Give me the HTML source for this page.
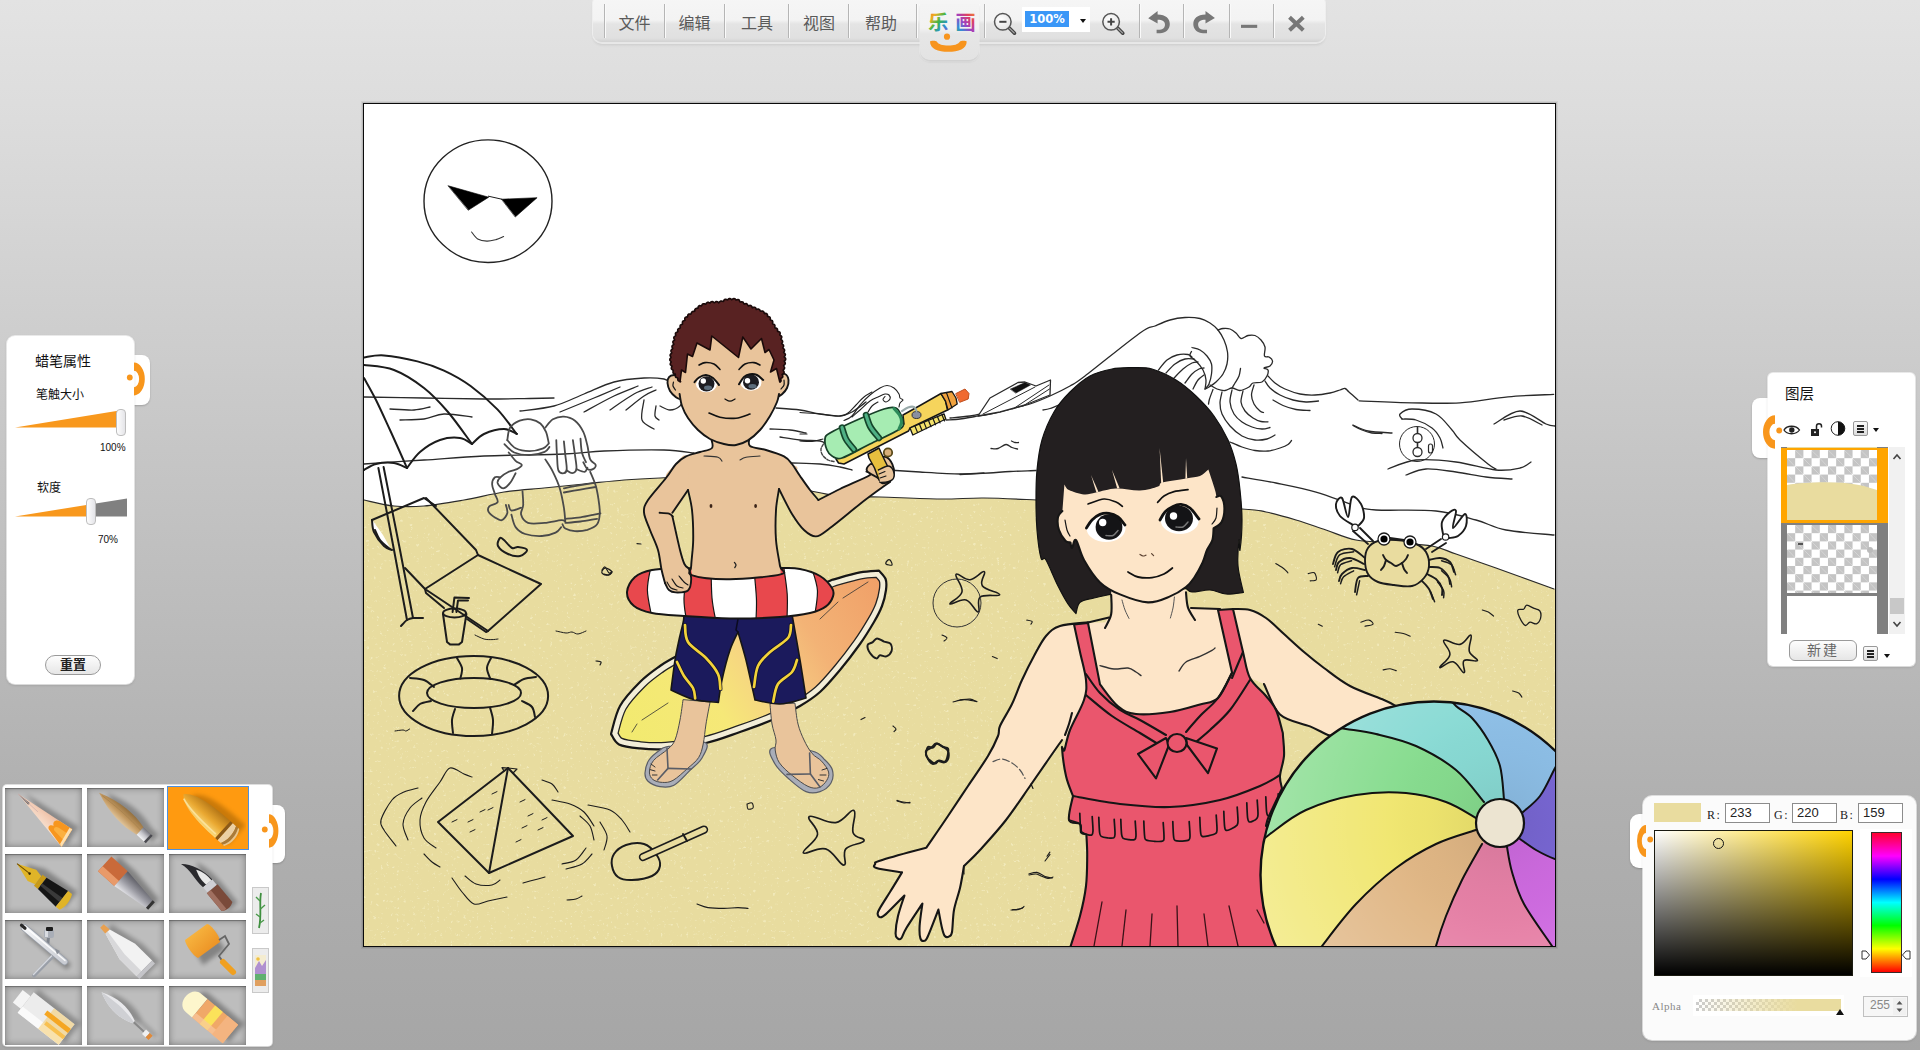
<!DOCTYPE html>
<html lang="zh"><head><meta charset="utf-8"><title>乐画</title>
<style>
html,body{margin:0;padding:0;}
body{width:1920px;height:1050px;overflow:hidden;position:relative;background:linear-gradient(180deg,#e3e3e3 0px,#dcdcdc 120px,#c4c4c4 480px,#b0b0b0 800px,#a6a6a6 1050px);font-family:"Liberation Sans","Noto Sans CJK SC",sans-serif;}
#cv{position:absolute;left:0;top:0;width:1920px;height:1050px;}

.abs{position:absolute;}
#tb{position:absolute;left:593px;top:-6px;width:732px;height:48px;border-radius:9px;background:linear-gradient(180deg,#f6f6f6 0,#f3f3f3 26px,#e4e4e4 30px,#e0e0e0 44px,#d2d2d2 48px);box-shadow:0 1px 0 1px rgba(255,255,255,.55),0 3px 3px rgba(0,0,0,.10);}
#tb .sep{position:absolute;top:9.500px;width:1px;height:34px;background:#b5b5b5;box-shadow:1px 0 0 #fafafa;}
#tb .mi{position:absolute;top:14px;font-size:16px;line-height:32px;color:#5a5a5a;width:60px;text-align:center;letter-spacing:0px;}
#logo{position:absolute;left:919.5px;top:4px;width:59px;height:56px;border-radius:0 0 10px 10px;background:linear-gradient(180deg,#f4f4f4 0,#f2f2f2 24px,#e6e6e6 30px,#e3e3e3 100%);box-shadow:0 2px 2px rgba(0,0,0,.12),0 1px 0 1px rgba(255,255,255,.4);}
#zoomf{position:absolute;left:1022px;top:7px;width:68px;height:25px;background:#fff;}
#zoomf span{position:absolute;left:3px;top:4px;width:44px;height:16px;background:#3a97f7;color:#fff;font-weight:bold;font-size:11.5px;line-height:16px;text-align:center;font-family:"DejaVu Sans","Liberation Sans",sans-serif;}
.panel{position:absolute;background:#fff;border-radius:8px;box-shadow:0 0 0 1px rgba(255,255,255,.6),0 1px 3px rgba(0,0,0,.18);}
.tab{position:absolute;background:#fff;box-shadow:0 1px 2px rgba(0,0,0,.2);}
.t14{position:absolute;font-size:14px;line-height:16px;color:#111;white-space:nowrap;}
.t12{position:absolute;font-size:12px;line-height:14px;color:#111;white-space:nowrap;}
.t10{position:absolute;font-size:10px;line-height:11px;color:#111;white-space:nowrap;font-family:"Liberation Sans",sans-serif;}
.hnd{position:absolute;width:10px;height:27px;border-radius:4px;border:1px solid #bdbdbd;background:linear-gradient(90deg,#fdfdfd,#e4e4e8);box-sizing:border-box;}
.btn{position:absolute;box-sizing:border-box;border:1px solid #9a9a9a;border-radius:10px;background:linear-gradient(180deg,#fdfdfd,#e6e6e6);text-align:center;color:#222;}
.cell{position:absolute;width:77px;height:59px;background:#bdbdbd;box-shadow:inset 0 0 7px rgba(0,0,0,.38),inset 0 1px 1px rgba(0,0,0,.3);overflow:hidden;}
.cell svg{position:absolute;left:0;top:0;}
.inp{position:absolute;box-sizing:border-box;border:1px solid #8c8c8c;background:#fff;font-size:13px;line-height:18px;color:#222;padding-left:4px;font-family:"Liberation Sans",sans-serif;}
.lab{position:absolute;font-size:12px;line-height:12px;color:#222;font-family:"Liberation Serif",serif;letter-spacing:1.5px;}
.lbtn{position:absolute;box-sizing:border-box;width:15px;height:15px;border:1px solid #999;border-radius:2px;background:linear-gradient(180deg,#fafafa,#dcdcdc);}
.lbtn i{position:absolute;left:3px;width:7px;height:1.6px;background:#222;}
.arr{position:absolute;width:0;height:0;border-left:3.5px solid transparent;border-right:3.5px solid transparent;border-top:4px solid #111;}

</style></head><body>
<svg id="cv" viewBox="0 0 1920 1050" width="1920" height="1050">
<defs><clipPath id="cpCanvas"><rect x="364" y="104" width="1191" height="842"/></clipPath>
<filter id="speck" x="0" y="0" width="100%" height="100%" color-interpolation-filters="sRGB"><feTurbulence type="fractalNoise" baseFrequency="0.3" numOctaves="3" seed="11" result="n"/><feColorMatrix in="n" type="matrix" values="0 0 0 0 0.97  0 0 0 0 0.95  0 0 0 0 0.80  6 0 0 0 -3.95"/><feComposite in2="SourceGraphic" operator="in"/></filter>
</defs>
<rect x="361" y="101" width="1197" height="848" fill="#000" opacity="0.06"/>
<rect x="362" y="102" width="1195" height="846" fill="#000" opacity="0.10"/>
<rect x="363" y="103" width="1193" height="844" fill="#0a0a0a"/>
<rect x="364" y="104" width="1191" height="842" fill="#fff"/>
<g clip-path="url(#cpCanvas)">
<ellipse cx="488" cy="201.200" rx="64" ry="61.300" fill="#fff" stroke="#222" stroke-width="1.400"/>
<path d="M448.3 185.8 L488.7 197.2 L468.5 210.1Z" fill="#000" stroke="#000" stroke-width="0.6" stroke-linejoin="round" stroke-linecap="round" />
<path d="M501.8 199.2 L537.1 197.7 L515.5 216.8Z" fill="#000" stroke="#000" stroke-width="0.6" stroke-linejoin="round" stroke-linecap="round" />
<path d="M488.4 196.2 L501.8 199.2" fill="none" stroke="#000" stroke-width="0.9" stroke-linejoin="round" stroke-linecap="round" />
<path d="M471.6 232C472.6 233.2 475.1 237.4 477.7 238.9C480.2 240.4 483.8 241 486.9 241.1C489.9 241.2 493.2 240.3 496 239.6C498.8 238.8 502.3 237.1 503.6 236.6" fill="none" stroke="#333" stroke-width="1.1" stroke-linejoin="round" stroke-linecap="round" />
<path d="M364 397C374 397.2 404 397.7 424 398C444 398.3 467.3 398.9 484 399C500.7 399.1 512.3 398.8 524 398.6C535.7 398.4 549 398.1 554 398" fill="none" stroke="#2a2a2a" stroke-width="1.3" stroke-linejoin="round" stroke-linecap="round" />
<path d="M520 411C525.7 410.2 543.3 408.8 554 406C564.7 403.2 574 398 584 394C594 390 604 384.7 614 382C624 379.3 635.7 378.5 644 378C652.3 377.5 659.7 378.2 664 379C668.3 379.8 669 382.3 670 383" fill="none" stroke="#2a2a2a" stroke-width="1.3" stroke-linejoin="round" stroke-linecap="round" />
<path d="M560 412C565.7 409.7 584 402.2 594 398C604 393.8 615.7 388.8 620 387" fill="none" stroke="#2a2a2a" stroke-width="1.3" stroke-linejoin="round" stroke-linecap="round" />
<path d="M584 412C589 409.3 605 400.3 614 396C623 391.7 634 387.7 638 386" fill="none" stroke="#2a2a2a" stroke-width="1.3" stroke-linejoin="round" stroke-linecap="round" />
<path d="M610 410C614 407.3 627 397.8 634 394C641 390.2 649 388.2 652 387" fill="none" stroke="#2a2a2a" stroke-width="1.3" stroke-linejoin="round" stroke-linecap="round" />
<path d="M626 410C629 407.7 639 399.3 644 396C649 392.7 654 391 656 390" fill="none" stroke="#2a2a2a" stroke-width="1.3" stroke-linejoin="round" stroke-linecap="round" />
<path d="M644 400C643.7 403.3 640.3 415.2 642 420C643.7 424.8 652 427.5 654 429" fill="none" stroke="#2a2a2a" stroke-width="1.3" stroke-linejoin="round" stroke-linecap="round" />
<path d="M656 406C655.8 407.7 654.5 413.7 655 416C655.5 418.3 658.3 419.3 659 420" fill="none" stroke="#2a2a2a" stroke-width="1.3" stroke-linejoin="round" stroke-linecap="round" />
<path d="M660 406C661.7 406.7 666.7 410 670 410C673.3 410 677.7 408 680 406C682.3 404 683.3 399.3 684 398" fill="none" stroke="#2a2a2a" stroke-width="1.3" stroke-linejoin="round" stroke-linecap="round" />
<path d="M390 409C394 409.2 407.3 410.3 414 410C420.7 409.7 427.3 407.5 430 407" fill="none" stroke="#2a2a2a" stroke-width="1.3" stroke-linejoin="round" stroke-linecap="round" />
<path d="M400 420C404 419.8 416.7 420 424 419C431.3 418 436 414.3 444 414C452 413.7 467.3 416.5 472 417" fill="none" stroke="#2a2a2a" stroke-width="1.3" stroke-linejoin="round" stroke-linecap="round" />
<path d="M364 464C374 463.3 404 461.3 424 460C444 458.7 460.7 457 484 456C507.3 455 544 454.8 564 454C584 453.2 587.3 451.7 604 451C620.7 450.3 649 449.7 664 450C679 450.3 689 452.5 694 453" fill="none" stroke="#2a2a2a" stroke-width="1.3" stroke-linejoin="round" stroke-linecap="round" />
<path d="M776 408C780 408.3 792.7 409 800 410C807.3 411 813.3 413 820 414C826.7 415 834.7 416.3 840 416C845.3 415.7 847.7 414.3 852 412C856.3 409.7 863.7 403.7 866 402" fill="none" stroke="#2a2a2a" stroke-width="1.3" stroke-linejoin="round" stroke-linecap="round" />
<path d="M770 429C773.3 429.2 784 429.3 790 430C796 430.7 803.3 432.5 806 433" fill="none" stroke="#2a2a2a" stroke-width="1.3" stroke-linejoin="round" stroke-linecap="round" />
<path d="M780 437C783.3 437.5 793.3 439.3 800 440C806.7 440.7 815.7 440.3 820 441C824.3 441.7 825 443.5 826 444" fill="none" stroke="#2a2a2a" stroke-width="1.3" stroke-linejoin="round" stroke-linecap="round" />
<path d="M792 463C796.7 463.2 812 463.3 820 464C828 464.7 834.7 466 840 467C845.3 468 850 469.5 852 470" fill="none" stroke="#2a2a2a" stroke-width="1.3" stroke-linejoin="round" stroke-linecap="round" />
<path d="M888 470C893.3 470.3 908 471.3 920 472C932 472.7 949.3 473.8 960 474C970.7 474.2 980 473.2 984 473" fill="none" stroke="#2a2a2a" stroke-width="1.3" stroke-linejoin="round" stroke-linecap="round" />
<path d="M950 418C953.3 417.7 964.3 416.8 970 416C975.7 415.2 981.7 413.5 984 413" fill="none" stroke="#2a2a2a" stroke-width="1.3" stroke-linejoin="round" stroke-linecap="round" />
<path d="M946 420C948.3 419.8 955.2 419.6 960 419C964.8 418.4 970 417.3 975 416.5C980 415.7 984.2 415.2 990 414C995.8 412.8 1003.3 410.7 1010 409C1016.7 407.3 1023.3 406.2 1030 404C1036.7 401.8 1043.3 399 1050 396C1056.7 393 1064.2 389.3 1070 386C1075.8 382.7 1073.3 384.8 1085 376C1096.7 367.2 1128.3 341.3 1140 333C1151.7 324.7 1150 328.2 1155 326C1160 323.8 1165 321.4 1170 320C1175 318.6 1180 317.8 1185 317.5C1190 317.2 1195.8 317.6 1200 318.5C1204.2 319.4 1207 321.1 1210 323C1213 324.9 1215.7 327.2 1218 330C1220.3 332.8 1222.4 336.3 1224 340C1225.6 343.7 1227 348 1227.5 352C1228 356 1227.8 360.3 1227 364C1226.2 367.7 1224.8 371 1223 374C1221.2 377 1218.3 379.8 1216 382C1213.7 384.2 1210.8 385.8 1209 387C1207.2 388.2 1205.7 388.7 1205 389" fill="none" stroke="#2a2a2a" stroke-width="1.3" stroke-linejoin="round" stroke-linecap="round" />
<path d="M1205 389C1205.2 387.5 1206.3 383.2 1206 380C1205.7 376.8 1204.7 373.2 1203 370C1201.3 366.8 1198.2 363.3 1196 361C1193.8 358.7 1190.8 357.6 1190 356C1189.2 354.4 1191.2 352.2 1191.5 351.5" fill="none" stroke="#2a2a2a" stroke-width="1.3" stroke-linejoin="round" stroke-linecap="round" />
<path d="M1192 347.5C1193.3 347.9 1197.5 348.6 1200 350C1202.5 351.4 1205.1 353.7 1207 356C1208.9 358.3 1210.8 361 1211.5 364C1212.2 367 1211.9 370.7 1211.5 374C1211.1 377.3 1209.9 381.7 1209 384C1208.1 386.3 1206.5 387.3 1206 388" fill="none" stroke="#2a2a2a" stroke-width="1.3" stroke-linejoin="round" stroke-linecap="round" />
<path d="M1158.5 370C1159.9 368.3 1163.9 362.5 1167 360C1170.1 357.5 1173.5 355.9 1177 355C1180.5 354.1 1185.5 354.2 1188 354.5C1190.5 354.8 1191.3 356.6 1192 357" fill="none" stroke="#2a2a2a" stroke-width="1.3" stroke-linejoin="round" stroke-linecap="round" />
<path d="M1166 373C1167.5 371.5 1171.8 366.3 1175 364C1178.2 361.7 1181.8 359.8 1185 359C1188.2 358.2 1192.5 359 1194 359" fill="none" stroke="#2a2a2a" stroke-width="1.3" stroke-linejoin="round" stroke-linecap="round" />
<path d="M1174 378C1175.5 376.5 1180 371.5 1183 369C1186 366.5 1189.5 364.2 1192 363C1194.5 361.8 1197 362.2 1198 362" fill="none" stroke="#2a2a2a" stroke-width="1.3" stroke-linejoin="round" stroke-linecap="round" />
<path d="M1185 383C1186.2 381.5 1189.7 376.3 1192 374C1194.3 371.7 1197 370 1199 369C1201 368 1203.2 368.2 1204 368" fill="none" stroke="#2a2a2a" stroke-width="1.3" stroke-linejoin="round" stroke-linecap="round" />
<path d="M1193 389C1193.8 387.5 1196.2 382.3 1198 380C1199.8 377.7 1203 375.8 1204 375" fill="none" stroke="#2a2a2a" stroke-width="1.3" stroke-linejoin="round" stroke-linecap="round" />
<path d="M1218 330C1218.8 329.8 1221 328.7 1223 328.5C1225 328.3 1227.8 328.2 1230 329C1232.2 329.8 1234.2 331.4 1236 333C1237.8 334.6 1239 338.1 1241 338.5C1243 338.9 1245.7 336 1248 335.5C1250.3 335 1252.8 334.8 1255 335.5C1257.2 336.2 1259.3 338.1 1261 340C1262.7 341.9 1264.4 344.3 1265 347C1265.6 349.7 1263.8 354.3 1264.5 356C1265.2 357.7 1267.7 356.2 1269 357C1270.3 357.8 1272.3 359.5 1272.5 361C1272.7 362.5 1271.4 364.8 1270 366C1268.6 367.2 1264.3 367.3 1264 368C1263.7 368.7 1267.5 368.7 1268 370C1268.5 371.3 1268 374 1267 376C1266 378 1264.3 380.8 1262 382C1259.7 383.2 1255.2 382.2 1253 383C1250.8 383.8 1251.2 385.8 1249 387C1246.8 388.2 1242.8 390.3 1240 390.5C1237.2 390.7 1234.5 388 1232 388C1229.5 388 1227.5 390.3 1225 390.5C1222.5 390.7 1219.5 389.9 1217 389C1214.5 388.1 1211.2 385.7 1210 385" fill="none" stroke="#2a2a2a" stroke-width="1.3" stroke-linejoin="round" stroke-linecap="round" />
<path d="M1240.5 368.5C1240.2 369.8 1239.9 373.6 1239 376C1238.1 378.4 1236.2 381 1235 383C1233.8 385 1232.5 387.2 1232 388" fill="none" stroke="#2a2a2a" stroke-width="1.3" stroke-linejoin="round" stroke-linecap="round" />
<path d="M1213 389.5C1212.4 391.1 1210.2 396.6 1209.5 399C1208.8 401.4 1208.7 403.2 1208.5 404" fill="none" stroke="#2a2a2a" stroke-width="1.3" stroke-linejoin="round" stroke-linecap="round" />
<path d="M1222 392C1221.7 393.8 1220 399.3 1220 403C1220 406.7 1220.3 410.2 1222 414C1223.7 417.8 1226.7 422.3 1230 426C1233.3 429.7 1237.8 433.7 1242 436C1246.2 438.3 1250.8 439.5 1255 440C1259.2 440.5 1263.7 439.8 1267 439C1270.3 438.2 1273.7 435.7 1275 435" fill="none" stroke="#2a2a2a" stroke-width="1.3" stroke-linejoin="round" stroke-linecap="round" />
<path d="M1232 390C1231.7 392 1229.7 398 1230 402C1230.3 406 1232 410.7 1234 414C1236 417.3 1239 419.8 1242 422C1245 424.2 1248.7 425.8 1252 427C1255.3 428.2 1259 428.9 1262 429C1265 429.1 1268.7 427.8 1270 427.5" fill="none" stroke="#2a2a2a" stroke-width="1.3" stroke-linejoin="round" stroke-linecap="round" />
<path d="M1243 391C1242.7 392.8 1240.7 398.7 1241 402C1241.3 405.3 1243 408.3 1245 411C1247 413.7 1250.3 416.2 1253 418C1255.7 419.8 1258.5 420.9 1261 421.5C1263.5 422.1 1266.8 421.8 1268 421.8" fill="none" stroke="#2a2a2a" stroke-width="1.3" stroke-linejoin="round" stroke-linecap="round" />
<path d="M1254 385C1253.6 386.7 1251.5 391.8 1251.5 395C1251.5 398.2 1252.6 401.3 1254 404C1255.4 406.7 1258.4 409.6 1260 411C1261.6 412.4 1262.9 412.2 1263.5 412.5" fill="none" stroke="#2a2a2a" stroke-width="1.3" stroke-linejoin="round" stroke-linecap="round" />
<path d="M1230 442C1232 442.8 1237.8 445.6 1242 447C1246.2 448.4 1250.7 449.8 1255 450.5C1259.3 451.2 1263.8 451.4 1268 451C1272.2 450.6 1276.7 449.1 1280 448C1283.3 446.9 1286.1 445.8 1288 444.5C1289.9 443.2 1290.9 441.2 1291.5 440.5" fill="none" stroke="#2a2a2a" stroke-width="1.3" stroke-linejoin="round" stroke-linecap="round" />
<path d="M1268 376C1269.2 377.2 1272.2 380.8 1275 383C1277.8 385.2 1280.8 387.2 1285 389C1289.2 390.8 1295 393 1300 394C1305 395 1310 395.2 1315 395C1320 394.8 1325.8 393.8 1330 393C1334.2 392.2 1337.5 390.8 1340 390C1342.5 389.2 1343.5 388.2 1345 388.5C1346.5 388.8 1346.8 390.1 1349 392C1351.2 393.9 1356.5 398.7 1358 400" fill="none" stroke="#2a2a2a" stroke-width="1.3" stroke-linejoin="round" stroke-linecap="round" />
<path d="M1265 381C1265.8 382.2 1267.5 385.7 1270 388C1272.5 390.3 1276.2 393 1280 395C1283.8 397 1288.7 398.8 1293 400C1297.3 401.2 1301.8 401.8 1306 402C1310.2 402.2 1316.4 401.2 1318.5 401" fill="none" stroke="#2a2a2a" stroke-width="1.3" stroke-linejoin="round" stroke-linecap="round" />
<path d="M1273 400C1274.7 400.9 1279.2 403.9 1283 405.5C1286.8 407.1 1291.5 408.7 1296 409.5C1300.5 410.3 1307.7 410.3 1310 410.5" fill="none" stroke="#2a2a2a" stroke-width="1.3" stroke-linejoin="round" stroke-linecap="round" />
<path d="M1353 425.5C1354.5 426.2 1358.8 428.8 1362 430C1365.2 431.2 1368.7 432.4 1372 433C1375.3 433.6 1380.3 433.4 1382 433.5" fill="none" stroke="#2a2a2a" stroke-width="1.3" stroke-linejoin="round" stroke-linecap="round" />
<path d="M1359.2 400.9C1368 401.2 1395.2 402.5 1412 402.8C1428.8 403.1 1444 403.8 1460 402.8C1476 401.8 1492.4 398.2 1508 396.8C1523.6 395.4 1546 394.8 1553.6 394.4" fill="none" stroke="#2a2a2a" stroke-width="1.3" stroke-linejoin="round" stroke-linecap="round" />
<path d="M978 416 L990 398 L1018 382.5 L1025 382 L1036 386 L1050.5 380 L1050 395 L1025 405 L1000 412Z" fill="#fff" stroke="#2a2a2a" stroke-width="1.3" stroke-linejoin="round" stroke-linecap="round" />
<path d="M1010.5 389 L1025 382.5 L1030.5 385 L1016 393Z" fill="#111" stroke="#111" stroke-width="0.5" stroke-linejoin="round" stroke-linecap="round" />
<path d="M983 414 L1035 387" fill="none" stroke="#2a2a2a" stroke-width="1" stroke-linejoin="round" stroke-linecap="round" />
<path d="M1013 409 L1049 385" fill="none" stroke="#2a2a2a" stroke-width="1" stroke-linejoin="round" stroke-linecap="round" />
<path d="M1023 406 L1049.5 389" fill="none" stroke="#2a2a2a" stroke-width="1" stroke-linejoin="round" stroke-linecap="round" />
<path d="M1043 410C1044.2 409.8 1047.2 409.4 1050 408.5C1052.8 407.6 1058.3 405.2 1060 404.5" fill="none" stroke="#2a2a2a" stroke-width="1.3" stroke-linejoin="round" stroke-linecap="round" />
<path d="M991 448.5C992.2 448.5 995.5 449.2 998 448.5C1000.5 447.8 1003.7 444.7 1006 444.5C1008.3 444.3 1010.1 446.8 1012 447.5C1013.9 448.2 1016.6 448.8 1017.5 449" fill="none" stroke="#2a2a2a" stroke-width="1.3" stroke-linejoin="round" stroke-linecap="round" />
<path d="M1011.5 441C1012.1 441.2 1013.8 442.2 1015 442.5C1016.2 442.8 1017.9 442.5 1018.5 442.5" fill="none" stroke="#2a2a2a" stroke-width="1.3" stroke-linejoin="round" stroke-linecap="round" />
<path d="M960 474.5C964.8 474.2 980.7 473.5 989 473C997.3 472.5 1002.2 471.9 1010 471.5C1017.8 471.1 1031.7 470.7 1036 470.5" fill="none" stroke="#2a2a2a" stroke-width="1.3" stroke-linejoin="round" stroke-linecap="round" />
<path d="M1402 419C1401.7 418.2 1398.3 415.7 1400 414C1401.7 412.3 1406 409 1412 409C1418 409 1429.3 410.5 1436 414C1442.7 417.5 1448 425.7 1452 430C1456 434.3 1454 434.3 1460 440C1466 445.7 1482 459.2 1488 464C1494 468.8 1494.7 468.2 1496 469" fill="none" stroke="#2a2a2a" stroke-width="1.3" stroke-linejoin="round" stroke-linecap="round" />
<path d="M1402 419C1404.3 419.2 1411 418.5 1416 420C1421 421.5 1428 425 1432 428C1436 431 1438.2 434.7 1440 438C1441.8 441.3 1442.5 446.3 1443 448" fill="none" stroke="#2a2a2a" stroke-width="1.3" stroke-linejoin="round" stroke-linecap="round" />
<path d="M1388 469C1392.7 467.5 1404.7 461.2 1416 460C1427.3 458.8 1442.7 460.3 1456 462C1469.3 463.7 1485.3 469 1496 470C1506.7 471 1514.2 469.3 1520 468C1525.8 466.7 1529.2 463 1531 462" fill="none" stroke="#2a2a2a" stroke-width="1.3" stroke-linejoin="round" stroke-linecap="round" />
<path d="M1406 475C1409.3 474 1417.7 469.5 1426 469C1434.3 468.5 1446 470.7 1456 472C1466 473.3 1476.7 475.8 1486 477C1495.3 478.2 1507.7 478.7 1512 479" fill="none" stroke="#2a2a2a" stroke-width="1.3" stroke-linejoin="round" stroke-linecap="round" />
<path d="M1494 424C1498.3 421.8 1511.3 411 1520 411C1528.7 411 1540.2 421.5 1546 424C1551.8 426.5 1553.5 425.7 1555 426" fill="none" stroke="#2a2a2a" stroke-width="1.3" stroke-linejoin="round" stroke-linecap="round" />
<path d="M1504 420C1507 419.3 1515.7 415.2 1522 416C1528.3 416.8 1538.7 423.5 1542 425" fill="none" stroke="#2a2a2a" stroke-width="1.3" stroke-linejoin="round" stroke-linecap="round" />
<path d="M1353 425C1355.5 426 1361.5 429.7 1368 431C1374.5 432.3 1388 432.7 1392 433" fill="none" stroke="#2a2a2a" stroke-width="1.3" stroke-linejoin="round" stroke-linecap="round" />
<circle cx="1417" cy="444" r="17.5" fill="none" stroke="#2a2a2a" stroke-width="1"/>
<circle cx="1417.5" cy="438" r="4.5" fill="#fff" stroke="#2a2a2a" stroke-width="1.3"/>
<circle cx="1417.5" cy="452" r="4.5" fill="#fff" stroke="#2a2a2a" stroke-width="1.3"/>
<path d="M1417.5 427V433M1417.5 443V447" stroke="#2a2a2a" stroke-width="1.6"/>
<rect x="1428.5" y="444" width="4" height="9" rx="2" fill="none" stroke="#2a2a2a" stroke-width="1.2"/>
<path d="M1242 477C1247.7 478 1263.7 480.5 1276 483C1288.3 485.5 1302.7 488.2 1316 492C1329.3 495.8 1346 503 1356 506C1366 509 1362.7 509.2 1376 510C1389.3 510.8 1419.3 509.3 1436 511C1452.7 512.7 1464.3 516.8 1476 520C1487.7 523.2 1493 527.5 1506 530C1519 532.5 1546 534.2 1554 535" fill="none" stroke="#2a2a2a" stroke-width="1.3" stroke-linejoin="round" stroke-linecap="round" />
<path d="M364 500C369 501 384 505 394 506C404 507 412.3 507 424 506C435.7 505 450.7 502.3 464 500C477.3 497.7 490.7 494 504 492C517.3 490 530.7 489.3 544 488C557.3 486.7 570.7 485.3 584 484C597.3 482.7 611.3 481 624 480C636.7 479 647.3 478.5 660 478C672.7 477.5 683.3 476.3 700 477C716.7 477.7 740.7 479.5 760 482C779.3 484.5 802.7 489.7 816 492C829.3 494.3 829.3 495.2 840 496C850.7 496.8 863.3 496.5 880 497C896.7 497.5 922.7 498.8 940 499C957.3 499.2 967.8 497.8 984 498C1000.2 498.2 1011 498.8 1037 500C1063 501.2 1105.8 503.5 1140 505C1174.2 506.5 1221 507.8 1242 509C1263 510.2 1257 510.2 1266 512C1275 513.8 1286 517 1296 520C1306 523 1316 526.7 1326 530C1336 533.3 1344.3 537.8 1356 540C1367.7 542.2 1383.3 542 1396 543C1408.7 544 1422 544.2 1432 546C1442 547.8 1445.3 550.3 1456 554C1466.7 557.7 1479.7 562.2 1496 568C1512.3 573.8 1544.3 585.5 1554 589L1556 589L1556 947L362 947L362 500Z" fill="#e8dc9f"/>
<defs><clipPath id="cpSand"><path d="M364 500C369 501 384 505 394 506C404 507 412.3 507 424 506C435.7 505 450.7 502.3 464 500C477.3 497.7 490.7 494 504 492C517.3 490 530.7 489.3 544 488C557.3 486.7 570.7 485.3 584 484C597.3 482.7 611.3 481 624 480C636.7 479 647.3 478.5 660 478C672.7 477.5 683.3 476.3 700 477C716.7 477.7 740.7 479.5 760 482C779.3 484.5 802.7 489.7 816 492C829.3 494.3 829.3 495.2 840 496C850.7 496.8 863.3 496.5 880 497C896.7 497.5 922.7 498.8 940 499C957.3 499.2 967.8 497.8 984 498C1000.2 498.2 1011 498.8 1037 500C1063 501.2 1105.8 503.5 1140 505C1174.2 506.5 1221 507.8 1242 509C1263 510.2 1257 510.2 1266 512C1275 513.8 1286 517 1296 520C1306 523 1316 526.7 1326 530C1336 533.3 1344.3 537.8 1356 540C1367.7 542.2 1383.3 542 1396 543C1408.7 544 1422 544.2 1432 546C1442 547.8 1445.3 550.3 1456 554C1466.7 557.7 1479.7 562.2 1496 568C1512.3 573.8 1544.3 585.5 1554 589L1556 589L1556 947L362 947L362 500Z"/></clipPath></defs>
<g clip-path="url(#cpSand)" opacity="0.6"><rect x="364" y="470" width="1191" height="476" fill="#fff" filter="url(#speck)"/></g>
<path d="M364 500C369 501 384 505 394 506C404 507 412.3 507 424 506C435.7 505 450.7 502.3 464 500C477.3 497.7 490.7 494 504 492C517.3 490 530.7 489.3 544 488C557.3 486.7 570.7 485.3 584 484C597.3 482.7 611.3 481 624 480C636.7 479 647.3 478.5 660 478C672.7 477.5 683.3 476.3 700 477C716.7 477.7 740.7 479.5 760 482C779.3 484.5 802.7 489.7 816 492C829.3 494.3 829.3 495.2 840 496C850.7 496.8 863.3 496.5 880 497C896.7 497.5 922.7 498.8 940 499C957.3 499.2 967.8 497.8 984 498C1000.2 498.2 1011 498.8 1037 500C1063 501.2 1105.8 503.5 1140 505C1174.2 506.5 1221 507.8 1242 509C1263 510.2 1257 510.2 1266 512C1275 513.8 1286 517 1296 520C1306 523 1316 526.7 1326 530C1336 533.3 1344.3 537.8 1356 540C1367.7 542.2 1383.3 542 1396 543C1408.7 544 1422 544.2 1432 546C1442 547.8 1445.3 550.3 1456 554C1466.7 557.7 1479.7 562.2 1496 568C1512.3 573.8 1544.3 585.5 1554 589" fill="none" stroke="#2a2a2a" stroke-width="1.2" stroke-linejoin="round" stroke-linecap="round" />
<path d="M364 357.4C367.3 357.1 375.1 354.7 384 355.4C392.9 356.1 407.4 358.9 417.4 361.4C427.4 363.9 435.1 366.5 444 370.6C452.9 374.7 461.7 379.5 470.6 386C479.5 392.5 489.8 401.5 497.4 409.4C505 417.3 513.2 429.6 516.4 433.6" fill="none" stroke="#1c1c1c" stroke-width="2.0" stroke-linejoin="round" stroke-linecap="round" />
<path d="M364 365C369 365.8 384 366.2 394 370C404 373.8 415 381 424 388C433 395 440 402.7 448 412C456 421.3 468 438.7 472 444" fill="none" stroke="#1c1c1c" stroke-width="2.0" stroke-linejoin="round" stroke-linecap="round" />
<path d="M364 378C366 381.7 371.7 391.3 376 400C380.3 408.7 384.8 418.7 390 430C395.2 441.3 404.2 461.7 407 468" fill="none" stroke="#1c1c1c" stroke-width="2.0" stroke-linejoin="round" stroke-linecap="round" />
<path d="M517 434C514.8 433.2 509.5 429 504 429C498.5 429 489.3 431.5 484 434C478.7 436.5 474 442.3 472 444L472 444C470 443 465.3 438.7 460 438C454.7 437.3 446.7 437.7 440 440C433.3 442.3 425.5 447.3 420 452C414.5 456.7 409.2 465.3 407 468L407 468C404.8 467.2 399.2 463.7 394 463C388.8 462.3 381 462.8 376 464C371 465.2 366 469 364 470" fill="none" stroke="#1c1c1c" stroke-width="2.0" stroke-linejoin="round" stroke-linecap="round" />
<path d="M378.4 468 L394 550 L394 550 L407 620" fill="none" stroke="#1c1c1c" stroke-width="2.0" stroke-linejoin="round" stroke-linecap="round" />
<path d="M383.6 467 L400 550 L400 550 L413 618" fill="none" stroke="#1c1c1c" stroke-width="2.0" stroke-linejoin="round" stroke-linecap="round" />
<path d="M401 626C402 625 405 621.3 407 620C409 618.7 410.3 618.3 413 618C415.7 617.7 421.3 618 423 618" fill="none" stroke="#1c1c1c" stroke-width="2.0" stroke-linejoin="round" stroke-linecap="round" />
<path d="M372 520 L424 498 L436 506" fill="none" stroke="#1c1c1c" stroke-width="2.0" stroke-linejoin="round" stroke-linecap="round" />
<path d="M426 498 L476 550 L478 555" fill="none" stroke="#1c1c1c" stroke-width="2.0" stroke-linejoin="round" stroke-linecap="round" />
<path d="M372.3 520C372.6 521.7 372.7 526.3 374 530C375.3 533.7 377.1 538.7 380 542C382.9 545.3 389.4 548.7 391.3 550L383 535Z" fill="#fff" stroke="none" stroke-width="0" stroke-linejoin="round" stroke-linecap="round" />
<path d="M372 520C372.3 522 372 527.7 374 532C376 536.3 381 543 384 546C387 549 390.7 549.3 392 550" fill="none" stroke="#1c1c1c" stroke-width="2.0" stroke-linejoin="round" stroke-linecap="round" />
<path d="M375 530C375.8 531.7 377.5 536.8 380 540C382.5 543.2 388.3 547.5 390 549" fill="none" stroke="#1c1c1c" stroke-width="2.0" stroke-linejoin="round" stroke-linecap="round" />
<path d="M405 568 L425 589" fill="none" stroke="#1c1c1c" stroke-width="2.0" stroke-linejoin="round" stroke-linecap="round" />
<path d="M425 589 L478 555 L541 584 L488 631Z" fill="none" stroke="#1c1c1c" stroke-width="2.0" stroke-linejoin="round" stroke-linecap="round" />
<path d="M425 589 L426 593 L444 608" fill="none" stroke="#1c1c1c" stroke-width="2.0" stroke-linejoin="round" stroke-linecap="round" />
<path d="M467 619 L486 632 L488 631" fill="none" stroke="#1c1c1c" stroke-width="2.0" stroke-linejoin="round" stroke-linecap="round" />
<path d="M443 614 L447 642 L450 644.4 L459 644.4 L462 642 L466.4 614" fill="none" stroke="#1c1c1c" stroke-width="2.0" stroke-linejoin="round" stroke-linecap="round" />
<ellipse cx="454.5" cy="613" rx="11.5" ry="4.5" fill="none" stroke="#1c1c1c" stroke-width="2.0"/>
<path d="M452.6 612 L454.4 597.6 L469 598" fill="none" stroke="#1c1c1c" stroke-width="2.0" stroke-linejoin="round" stroke-linecap="round" />
<path d="M456.4 612 L458 600.4 L468 600.4" fill="none" stroke="#1c1c1c" stroke-width="2.0" stroke-linejoin="round" stroke-linecap="round" />
<path d="M500 538C499 539 496.7 543.3 498 546C499.3 548.7 504.3 552.3 508 554C511.7 555.7 516.8 556.7 520 556C523.2 555.3 527.3 551.5 527 550C526.7 548.5 520.5 547.3 518 547C515.5 546.7 514.3 549.2 512 548C509.7 546.8 506 541.7 504 540C502 538.3 501 537 500 538Z" fill="none" stroke="#1c1c1c" stroke-width="2.0" stroke-linejoin="round" stroke-linecap="round" />
<path d="M507.3 440.1C507.8 438 508 430.8 510.1 427.6C512.2 424.4 516.2 422.1 519.7 420.7C523.2 419.3 527.3 418.8 530.8 419.3C534.2 419.8 537.9 421.4 540.4 423.5C542.9 425.6 544.6 428.6 546 431.8C547.4 435 548.2 441 548.7 442.8" fill="none" stroke="#4a4a4a" stroke-width="1.8" stroke-linejoin="round" stroke-linecap="round" />
<path d="M507.3 440.1C508.7 441.5 511.9 446.5 515.6 448.3C519.3 450.1 524.8 451.1 529.4 451.1C534 451.1 540 449.6 543.2 448.3C546.4 447 547.8 444.3 548.7 443.5" fill="none" stroke="#4a4a4a" stroke-width="1.8" stroke-linejoin="round" stroke-linecap="round" />
<path d="M504.5 444.2C506.1 445.6 510.1 450.7 514.2 452.5C518.4 454.3 524.3 455.3 529.4 455.2C534.5 455.1 541.3 453.2 544.6 451.8C547.9 450.4 548.6 447.8 549.4 447" fill="none" stroke="#4a4a4a" stroke-width="1.8" stroke-linejoin="round" stroke-linecap="round" />
<path d="M508.7 452.5C509.9 453.9 513.4 458.7 515.6 460.8C517.8 462.9 521.6 463.5 521.8 464.9C522 466.3 519.2 468 517 469.1C514.8 470.2 511.5 470.4 508.7 471.8C505.9 473.2 502.2 475.5 500.4 477.3C498.5 479.1 497.2 481 497.6 482.9C498.1 484.8 501 488.4 503.1 488.4C505.2 488.4 508 485.4 510.1 482.9C512.2 480.4 514.7 474.8 515.6 473.2" fill="none" stroke="#4a4a4a" stroke-width="1.8" stroke-linejoin="round" stroke-linecap="round" />
<path d="M500.4 477.3C499.5 477.3 496.3 476.1 494.9 477.3C493.5 478.5 492.1 481.5 492.1 484.3C492.1 487.1 494 490.9 494.9 493.9C495.8 496.9 498.5 500.1 497.6 502.2C496.7 504.3 490.8 504.8 489.3 506.4C487.8 508 487.7 510.1 488.6 511.9C489.5 513.7 492.7 516 494.9 517.4C497.1 518.8 499.7 520.9 501.8 520.2C503.9 519.5 506.6 515.8 507.3 513.3C508 510.8 506.1 506.4 505.9 505" fill="none" stroke="#4a4a4a" stroke-width="1.8" stroke-linejoin="round" stroke-linecap="round" />
<path d="M545.3 459.4C546.6 461.5 550.5 467 552.9 471.8C555.3 476.6 558 482.4 559.8 488.4C561.6 494.4 563 502.2 563.9 507.7C564.8 513.2 565.1 519.2 565.3 521.5" fill="none" stroke="#4a4a4a" stroke-width="1.8" stroke-linejoin="round" stroke-linecap="round" />
<path d="M522.5 491.2C522.6 493.5 523.4 501.1 523.2 505C523 508.9 520.3 511.6 521.1 514.6C521.9 517.6 524.1 521.5 528 522.9C531.9 524.3 539.1 523.3 544.6 522.9C550.1 522.5 557.8 520.4 561.2 520.2C564.7 520 564.6 521.3 565.3 521.5" fill="none" stroke="#4a4a4a" stroke-width="1.8" stroke-linejoin="round" stroke-linecap="round" />
<path d="M508.7 505C509.1 505.9 509.3 510.1 511.4 510.5C513.5 510.9 519.5 508.2 521.1 507.7" fill="none" stroke="#4a4a4a" stroke-width="1.8" stroke-linejoin="round" stroke-linecap="round" />
<path d="M511.4 514.6C512.1 516.7 513.3 523.9 515.6 527.1C517.9 530.3 520.8 532.5 525.2 534C529.6 535.5 536.7 536.2 541.8 536C546.9 535.8 552.4 534.1 555.6 532.6C558.8 531.1 560.3 528 561.2 527.1" fill="none" stroke="#4a4a4a" stroke-width="1.8" stroke-linejoin="round" stroke-linecap="round" />
<path d="M545.3 427.6C546.6 426.2 549.8 421.1 552.9 419.3C556 417.5 560.2 416.4 563.9 416.6C567.6 416.8 571.8 418.2 575 420.7C578.2 423.2 581.2 427.6 583.3 431.8C585.4 436 586.2 441 587.4 445.6C588.5 450.2 588.8 456.2 590.2 459.4C591.6 462.6 595.2 463.3 595.7 464.9C596.2 466.5 594.3 468.4 592.9 469.1C591.5 469.8 589 470.2 587.4 469.1C585.8 468 584 463.4 583.3 462.2" fill="none" stroke="#4a4a4a" stroke-width="1.8" stroke-linejoin="round" stroke-linecap="round" />
<path d="M556.3 440.1C556.4 442.6 556.6 450.1 557 455.2C557.4 460.2 557.2 467.4 558.4 470.4C559.5 473.4 562.5 473.4 563.9 473.2C565.3 473 566.5 472.1 566.7 469.1C566.9 466.1 565.8 459.8 565.3 455.2C564.8 450.6 564.1 443.7 563.9 441.4" fill="none" stroke="#4a4a4a" stroke-width="1.8" stroke-linejoin="round" stroke-linecap="round" />
<path d="M566.7 470.4C567.6 470.9 570.6 473.4 572.2 473.2C573.8 473 575.9 472.1 576.4 469.1C576.9 466.1 575.6 460 575 455.2C574.4 450.4 573.2 442.6 572.9 440.1" fill="none" stroke="#4a4a4a" stroke-width="1.8" stroke-linejoin="round" stroke-linecap="round" />
<path d="M576.4 469.1C577.8 469.6 582.8 472 584.6 471.8C586.4 471.6 586.9 468.4 587.4 467.7" fill="none" stroke="#4a4a4a" stroke-width="1.8" stroke-linejoin="round" stroke-linecap="round" />
<path d="M580.5 438.7C580.7 441 581 448.6 581.9 452.5C582.8 456.4 585.3 460.6 586 462.2" fill="none" stroke="#4a4a4a" stroke-width="1.8" stroke-linejoin="round" stroke-linecap="round" />
<path d="M590.2 471.8C591.1 474.1 594.3 481 595.7 485.6C597.1 490.2 597.8 494.8 598.5 499.4C599.2 504 600 509.1 599.8 513.3C599.6 517.4 599.2 521.5 597.1 524.3C595 527 591.1 528.6 587.4 529.8C583.7 530.9 578.7 531.4 575 531.2C571.3 531 567.4 529.6 565.3 528.5C563.2 527.4 563 525 562.5 524.3" fill="none" stroke="#4a4a4a" stroke-width="1.8" stroke-linejoin="round" stroke-linecap="round" />
<path d="M563.9 488.4C566.2 487.9 572.6 486.5 577.7 485.6C582.8 484.7 591.5 483.3 594.3 482.9" fill="none" stroke="#4a4a4a" stroke-width="1.8" stroke-linejoin="round" stroke-linecap="round" />
<path d="M563.9 492.5C566.4 492.1 573.8 490.7 579.1 489.8C584.4 488.9 592.9 487.5 595.7 487" fill="none" stroke="#4a4a4a" stroke-width="1.8" stroke-linejoin="round" stroke-linecap="round" />
<path d="M565.3 518.8C567.8 518.6 575.7 518.1 580.5 517.4C585.3 516.7 591 515.3 594.3 514.6C597.6 513.9 599.5 513.5 600.5 513.3" fill="none" stroke="#4a4a4a" stroke-width="1.8" stroke-linejoin="round" stroke-linecap="round" />
<path d="M565.3 522.9C567.8 522.7 575.2 522.2 580.5 521.5C585.8 520.8 594.3 519.2 597.1 518.8" fill="none" stroke="#4a4a4a" stroke-width="1.8" stroke-linejoin="round" stroke-linecap="round" />
<ellipse cx="473.6" cy="696" rx="74.5" ry="40" fill="none" stroke="#1c1c1c" stroke-width="2.0"/>
<ellipse cx="474" cy="693" rx="47" ry="15" fill="none" stroke="#1c1c1c" stroke-width="2.0"/>
<path d="M457 658C457.8 659.7 461.4 664.6 462 668C462.6 671.4 460.7 676.7 460.4 678.4" fill="none" stroke="#1c1c1c" stroke-width="2.0" stroke-linejoin="round" stroke-linecap="round" />
<path d="M491 658C490.3 659.7 487.1 664.5 487 668C486.9 671.5 489.8 677.2 490.4 679" fill="none" stroke="#1c1c1c" stroke-width="2.0" stroke-linejoin="round" stroke-linecap="round" />
<path d="M410 678C412.3 678.3 420 678.5 424 680C428 681.5 432.3 685.8 434 687" fill="none" stroke="#1c1c1c" stroke-width="2.0" stroke-linejoin="round" stroke-linecap="round" />
<path d="M536 677C534 677.3 527.7 677.7 524 679C520.3 680.3 515.7 684 514 685" fill="none" stroke="#1c1c1c" stroke-width="2.0" stroke-linejoin="round" stroke-linecap="round" />
<path d="M413 711C414.2 709.8 417 705.7 420 704C423 702.3 429.2 701.5 431 701" fill="none" stroke="#1c1c1c" stroke-width="2.0" stroke-linejoin="round" stroke-linecap="round" />
<path d="M535 717C534.5 715.3 534.2 709.7 532 707C529.8 704.3 523.7 702 522 701" fill="none" stroke="#1c1c1c" stroke-width="2.0" stroke-linejoin="round" stroke-linecap="round" />
<path d="M453 733C452.8 730.8 451.7 724 452 720C452.3 716 454.5 710.8 455 709" fill="none" stroke="#1c1c1c" stroke-width="2.0" stroke-linejoin="round" stroke-linecap="round" />
<path d="M492 734C492.2 731.7 493.3 724.4 493 720C492.7 715.6 490.5 709.7 490 707.6" fill="none" stroke="#1c1c1c" stroke-width="2.0" stroke-linejoin="round" stroke-linecap="round" />
<path d="M508 768 L438 822 L489 873 L573 836Z" fill="none" stroke="#1c1c1c" stroke-width="2.0" stroke-linejoin="round" stroke-linecap="round" />
<path d="M508 768 L489 873" fill="none" stroke="#1c1c1c" stroke-width="2.0" stroke-linejoin="round" stroke-linecap="round" />
<path d="M508 768 L502 767.6 L504 771" fill="none" stroke="#1c1c1c" stroke-width="1.2" stroke-linejoin="round" stroke-linecap="round" />
<path d="M508 768 L517 769 L513 773" fill="none" stroke="#1c1c1c" stroke-width="1.2" stroke-linejoin="round" stroke-linecap="round" />
<path d="M396 846C394 843.3 386.5 834.3 384 830C381.5 825.7 379.7 825 381 820C382.3 815 388.2 804.7 392 800C395.8 795.3 399.7 794 404 792C408.3 790 415.7 788.7 418 788" fill="none" stroke="#1c1c1c" stroke-width="1.1" stroke-linejoin="round" stroke-linecap="round" />
<path d="M408 840C407.2 837.3 402.7 829.3 403 824C403.3 818.7 406.8 812.3 410 808C413.2 803.7 420 799.7 422 798" fill="none" stroke="#1c1c1c" stroke-width="1.1" stroke-linejoin="round" stroke-linecap="round" />
<path d="M436 848C434 846.3 426.7 842.7 424 838C421.3 833.3 419.7 826 420 820C420.3 814 422.7 808.3 426 802C429.3 795.7 436 787.7 440 782C444 776.3 446 769.3 450 768C454 766.7 460.3 772.5 464 774C467.7 775.5 470.7 776.5 472 777" fill="none" stroke="#1c1c1c" stroke-width="1.1" stroke-linejoin="round" stroke-linecap="round" />
<path d="M542 780C543.7 780.7 549.3 782 552 784C554.7 786 557 790.7 558 792" fill="none" stroke="#1c1c1c" stroke-width="1.1" stroke-linejoin="round" stroke-linecap="round" />
<path d="M552 800C555 800.7 564.7 802 570 804C575.3 806 580 808.3 584 812C588 815.7 592.3 823.7 594 826" fill="none" stroke="#1c1c1c" stroke-width="1.1" stroke-linejoin="round" stroke-linecap="round" />
<path d="M588 805C591.7 805.8 604.3 807.5 610 810C615.7 812.5 618.7 816.3 622 820C625.3 823.7 628.7 830 630 832" fill="none" stroke="#1c1c1c" stroke-width="1.1" stroke-linejoin="round" stroke-linecap="round" />
<path d="M580 816C581.7 817.7 587.7 822 590 826C592.3 830 593.3 837.7 594 840" fill="none" stroke="#1c1c1c" stroke-width="1.1" stroke-linejoin="round" stroke-linecap="round" />
<path d="M600 822C601.2 824.3 606.3 831.3 607 836C607.7 840.7 604.5 847.7 604 850" fill="none" stroke="#1c1c1c" stroke-width="1.1" stroke-linejoin="round" stroke-linecap="round" />
<path d="M562 864C564.3 863.3 572 862.7 576 860C580 857.3 584.3 850 586 848" fill="none" stroke="#1c1c1c" stroke-width="1.1" stroke-linejoin="round" stroke-linecap="round" />
<path d="M566 869C568.7 868.2 577.7 866.5 582 864C586.3 861.5 590.3 855.7 592 854" fill="none" stroke="#1c1c1c" stroke-width="1.1" stroke-linejoin="round" stroke-linecap="round" />
<path d="M424 854C425.3 855.3 429.3 859.8 432 862C434.7 864.2 438.7 866.2 440 867" fill="none" stroke="#1c1c1c" stroke-width="1.1" stroke-linejoin="round" stroke-linecap="round" />
<path d="M465 876C466.8 877.3 471.5 882.5 476 884C480.5 885.5 488 885.7 492 885C496 884.3 498.7 880.8 500 880" fill="none" stroke="#1c1c1c" stroke-width="1.1" stroke-linejoin="round" stroke-linecap="round" />
<path d="M452 878C453.7 880.3 458.3 887.7 462 892C465.7 896.3 469.7 902.5 474 904C478.3 905.5 482.5 902.2 488 901C493.5 899.8 503.8 897.7 507 897" fill="none" stroke="#1c1c1c" stroke-width="1.1" stroke-linejoin="round" stroke-linecap="round" />
<path d="M523 883C524.8 882.5 530.3 881 534 880C537.7 879 543.2 877.5 545 877" fill="none" stroke="#1c1c1c" stroke-width="1.1" stroke-linejoin="round" stroke-linecap="round" />
<path d="M567 900C568.5 899.8 573.5 899.7 576 899C578.5 898.3 581 896.5 582 896" fill="none" stroke="#1c1c1c" stroke-width="1.1" stroke-linejoin="round" stroke-linecap="round" />
<path d="M452 822 L457 819.6" fill="none" stroke="#1c1c1c" stroke-width="1" stroke-linejoin="round" stroke-linecap="round" />
<path d="M468 822 L473 819.6" fill="none" stroke="#1c1c1c" stroke-width="1" stroke-linejoin="round" stroke-linecap="round" />
<path d="M480 812 L485 809.6" fill="none" stroke="#1c1c1c" stroke-width="1" stroke-linejoin="round" stroke-linecap="round" />
<path d="M488 810 L493 807.6" fill="none" stroke="#1c1c1c" stroke-width="1" stroke-linejoin="round" stroke-linecap="round" />
<path d="M470 832 L475 829.6" fill="none" stroke="#1c1c1c" stroke-width="1" stroke-linejoin="round" stroke-linecap="round" />
<path d="M492 794 L497 791.6" fill="none" stroke="#1c1c1c" stroke-width="1" stroke-linejoin="round" stroke-linecap="round" />
<path d="M520 802 L525 799.6" fill="none" stroke="#1c1c1c" stroke-width="1" stroke-linejoin="round" stroke-linecap="round" />
<path d="M528 816 L533 813.6" fill="none" stroke="#1c1c1c" stroke-width="1" stroke-linejoin="round" stroke-linecap="round" />
<path d="M522 828 L527 825.6" fill="none" stroke="#1c1c1c" stroke-width="1" stroke-linejoin="round" stroke-linecap="round" />
<path d="M538 830 L543 827.6" fill="none" stroke="#1c1c1c" stroke-width="1" stroke-linejoin="round" stroke-linecap="round" />
<path d="M516 842 L521 839.6" fill="none" stroke="#1c1c1c" stroke-width="1" stroke-linejoin="round" stroke-linecap="round" />
<path d="M542 820 L547 817.6" fill="none" stroke="#1c1c1c" stroke-width="1" stroke-linejoin="round" stroke-linecap="round" />
<path d="M612 866C611.3 862.2 611.7 857.5 614 854C616.3 850.5 621 846.7 626 845C631 843.3 639 842.5 644 844C649 845.5 653.3 850.3 656 854C658.7 857.7 660.7 862.3 660 866C659.3 869.7 656.7 873.7 652 876C647.3 878.3 637.7 879.8 632 880C626.3 880.2 621.3 879.3 618 877C614.7 874.7 612.7 869.8 612 866Z" fill="none" stroke="#1c1c1c" stroke-width="2.0" stroke-linejoin="round" stroke-linecap="round" />
<path d="M643 857 L704 829.6" fill="none" stroke="#1c1c1c" stroke-width="8.4" stroke-linejoin="round" stroke-linecap="round" />
<path d="M643 857 L704 829.6" fill="none" stroke="#e9dc9f" stroke-width="5.2" stroke-linejoin="round" stroke-linecap="round" />
<path d="M683 834 L687 841" fill="none" stroke="#1c1c1c" stroke-width="2.0" stroke-linejoin="round" stroke-linecap="round" />
<path d="M809.4 816.5C813.2 814 826.5 823.9 835.7 822.6C844.9 821.3 850.3 808.3 853.9 810.4C857.5 812.5 851 826.4 853.1 832.7C855.2 839 865.5 837.5 864 840.8C862.5 844.1 850 843.9 845.8 848.9C841.6 853.9 848 865.1 843.8 865.1C839.6 865.1 834 851.4 825.6 848.9C817.2 846.4 805 855.8 803.3 852.9C801.6 850 816.2 842.2 817.5 834.7C818.8 827.2 805.6 819 809.4 816.5Z" fill="none" stroke="#1c1c1c" stroke-width="1.7" stroke-linejoin="round" stroke-linecap="round" />
<path d="M926 755C925.8 752.9 926.8 748.2 928 747C929.2 745.8 931.5 748.2 933 747.6C934.5 747 935.3 743.7 937 743.6C938.7 743.5 941.2 746.2 943 747C944.8 747.8 947.2 746.9 948 748.4C948.8 749.9 948.1 753.8 947.6 756C947.1 758.2 946.4 760.9 945 761.6C943.6 762.3 940.7 760.1 939 760.4C937.3 760.7 936.7 763.7 935 763.6C933.3 763.5 930.5 761 929 759.6C927.5 758.2 926.2 757.1 926 755Z" fill="none" stroke="#1c1c1c" stroke-width="2.0" stroke-linejoin="round" stroke-linecap="round" />
<path d="M870 653C868.5 650.8 867.2 646.8 867.6 645C868 643.2 870.8 643.5 872.4 642.4C874 641.3 875.1 638.5 877 638.4C878.9 638.3 881.8 640.7 884 641.6C886.2 642.5 889.1 642 890.4 643.6C891.7 645.2 892.3 648.9 891.6 651C890.9 653.1 888.3 655.7 886.4 656.4C884.5 657.1 881.7 654.9 880 655.2C878.3 655.5 878.1 658.8 876.4 658.4C874.7 658 871.5 655.2 870 653Z" fill="none" stroke="#1c1c1c" stroke-width="2.0" stroke-linejoin="round" stroke-linecap="round" />
<path d="M928 759C926.8 756.8 925.5 752.8 926 751C926.5 749.2 929.3 749.2 931 748C932.7 746.8 934.1 743.9 936 743.6C937.9 743.3 940.5 745.3 942.4 746.4C944.3 747.5 946.6 748.5 947.6 750.4C948.6 752.3 948.9 756 948.4 758C947.9 760 946.1 761.9 944.4 762.4C942.7 762.9 939.9 760.7 938 761C936.1 761.3 934.7 764.3 933 764C931.3 763.7 929.2 761.2 928 759Z" fill="none" stroke="#1c1c1c" stroke-width="2.0" stroke-linejoin="round" stroke-linecap="round" />
<path d="M556 631C557.7 631.3 563.3 632.8 566 633C568.7 633.2 570 631.8 572 632C574 632.2 575.7 634.2 578 634C580.3 633.8 584.7 631.5 586 631" fill="none" stroke="#1c1c1c" stroke-width="1" stroke-linejoin="round" stroke-linecap="round" />
<path d="M475 635C476.5 635.7 481.2 638.2 484 639C486.8 639.8 489.7 639.6 492 639.6C494.3 639.6 497 639.1 498 639" fill="none" stroke="#1c1c1c" stroke-width="1" stroke-linejoin="round" stroke-linecap="round" />
<path d="M395 731C396.3 730.8 401.2 730 403 730C404.8 730 404.9 731.2 406 731C407.1 730.8 409 729.3 409.6 729" fill="none" stroke="#1c1c1c" stroke-width="1" stroke-linejoin="round" stroke-linecap="round" />
<path d="M602 570C602.5 569.5 603.8 566.5 605 567C606.2 567.5 607.8 572.2 609 573C610.2 573.8 612 571.3 612 571.6C612 571.9 610.3 574.6 609 575C607.7 575.4 604.8 574.2 604 574" fill="none" stroke="#1c1c1c" stroke-width="1.2" stroke-linejoin="round" stroke-linecap="round" />
<path d="M596 661C596.8 661.2 600.3 661.3 601 662C601.7 662.7 600.2 664.5 600 665" fill="none" stroke="#1c1c1c" stroke-width="1.2" stroke-linejoin="round" stroke-linecap="round" />
<path d="M637 543.6 L641 544" fill="none" stroke="#1c1c1c" stroke-width="1.2" stroke-linejoin="round" stroke-linecap="round" />
<path d="M602 571C602.5 570 604.3 567.8 606 568C607.7 568.2 611.7 570.8 612 572C612.3 573.2 609.5 574.7 608 575C606.5 575.3 604 574.7 603 574C602 573.3 601.5 572 602 571Z" fill="none" stroke="#1c1c1c" stroke-width="1.2" stroke-linejoin="round" stroke-linecap="round" />
<path d="M887 561C887.7 560.3 889.2 559.3 890 560C890.8 560.7 892.7 564.3 892 565C891.3 565.7 886.8 564.7 886 564C885.2 563.3 886.3 561.7 887 561Z" fill="none" stroke="#1c1c1c" stroke-width="1.2" stroke-linejoin="round" stroke-linecap="round" />
<path d="M953 702C954.8 701.6 960 699.7 964 699.6C968 699.5 974.8 701.3 977 701.6" fill="none" stroke="#1c1c1c" stroke-width="1.1" stroke-linejoin="round" stroke-linecap="round" />
<path d="M861 719.6 L865 717.6" fill="none" stroke="#1c1c1c" stroke-width="1.1" stroke-linejoin="round" stroke-linecap="round" />
<path d="M893 726C893.5 726.5 895.8 728.1 896 729C896.2 729.9 894.3 731.2 894 731.6" fill="none" stroke="#1c1c1c" stroke-width="1.1" stroke-linejoin="round" stroke-linecap="round" />
<path d="M897 801C898.2 801.3 901.8 802.8 904 803C906.2 803.2 909 802.5 910 802.4" fill="none" stroke="#1c1c1c" stroke-width="1.1" stroke-linejoin="round" stroke-linecap="round" />
<path d="M747 804C747.8 803.8 751 802.3 752 803C753 803.7 753.7 807 753 808C752.3 809 749 809.7 748 809C747 808.3 747.2 804.8 747 804" fill="none" stroke="#1c1c1c" stroke-width="1.1" stroke-linejoin="round" stroke-linecap="round" />
<path d="M942 635C942.8 635.5 946.7 637 947 638C947.3 639 944.5 640.5 944 641" fill="none" stroke="#1c1c1c" stroke-width="1.1" stroke-linejoin="round" stroke-linecap="round" />
<path d="M897 800.4C898 800.7 900.8 801.6 903 802C905.2 802.4 908.8 802.8 910 803" fill="none" stroke="#1c1c1c" stroke-width="1.1" stroke-linejoin="round" stroke-linecap="round" />
<path d="M1029 875C1030.2 874.8 1034 873.8 1036 874C1038 874.2 1039 875.3 1041 876C1043 876.7 1046 878.2 1048 878.4C1050 878.6 1052.2 877.2 1053 877" fill="none" stroke="#1c1c1c" stroke-width="1.1" stroke-linejoin="round" stroke-linecap="round" />
<path d="M1045 861 L1050 854.4" fill="none" stroke="#1c1c1c" stroke-width="1.1" stroke-linejoin="round" stroke-linecap="round" />
<path d="M1011 910C1012.2 909.9 1016 910 1018 909.6C1020 909.2 1022.2 907.9 1023 907.6" fill="none" stroke="#1c1c1c" stroke-width="1.1" stroke-linejoin="round" stroke-linecap="round" />
<path d="M697 904C698.8 904.6 703.5 906.9 708 907.6C712.5 908.3 719 908.4 724 908.4C729 908.4 734 907.6 738 907.6C742 907.6 746.3 908.3 748 908.4" fill="none" stroke="#1c1c1c" stroke-width="1.1" stroke-linejoin="round" stroke-linecap="round" />
<path d="M956 574.4C957.7 571.9 964.3 580.3 970.1 579.7C975.9 579.1 981.8 570.4 984.3 571.6C986.8 572.8 979.1 580.9 982.3 585.7C985.5 590.5 1000.1 592.2 999.7 594.6C999.3 597 984.6 593.5 980.2 597.1C975.8 600.7 981.1 611.4 978.2 612C975.3 612.6 971.9 601.6 966.1 599.9C960.3 598.2 950.7 605.6 949.9 603.9C949.1 602.2 960.7 597.9 962 591.8C963.3 585.7 954.3 576.9 956 574.4Z" fill="none" stroke="#1c1c1c" stroke-width="1.6" stroke-linejoin="round" stroke-linecap="round" />
<path d="M1365 560C1365 555.7 1365.8 551.2 1368 548C1370.2 544.8 1373.3 542.3 1378 541C1382.7 539.7 1389.7 539.5 1396 540C1402.3 540.5 1411 542 1416 544C1421 546 1423.8 548.3 1426 552C1428.2 555.7 1429.3 561.7 1429 566C1428.7 570.3 1426.8 574.7 1424 578C1421.2 581.3 1417 584.8 1412 586C1407 587.2 1399.7 585.7 1394 585C1388.3 584.3 1382.3 583.8 1378 582C1373.7 580.2 1370.2 577.7 1368 574C1365.8 570.3 1365 564.3 1365 560Z" fill="#e9dc9f" stroke="#1c1c1c" stroke-width="1.9" stroke-linejoin="round" stroke-linecap="round" />
<path d="M1383 555C1383.5 555.8 1384.7 558.7 1386 560C1387.3 561.3 1389.3 562 1391 563C1392.7 564 1394.2 566 1396 566C1397.8 566 1400.3 564.2 1402 563C1403.7 561.8 1405 560.3 1406 559C1407 557.7 1407.7 555.7 1408 555" fill="none" stroke="#1c1c1c" stroke-width="1.9" stroke-linejoin="round" stroke-linecap="round" />
<path d="M1386 560C1385.7 561 1384.8 564.3 1384 566C1383.2 567.7 1381.5 569.3 1381 570" fill="none" stroke="#1c1c1c" stroke-width="1.9" stroke-linejoin="round" stroke-linecap="round" />
<path d="M1402 563C1402.3 564 1403.2 567.3 1404 569C1404.8 570.7 1406.5 572.3 1407 573" fill="none" stroke="#1c1c1c" stroke-width="1.9" stroke-linejoin="round" stroke-linecap="round" />
<circle cx="1384.0" cy="539.0" r="6" fill="#fff" stroke="#1c1c1c" stroke-width="1.3"/><circle cx="1384.0" cy="539.0" r="3.6" fill="#000"/>
<circle cx="1410.0" cy="542.0" r="6" fill="#fff" stroke="#1c1c1c" stroke-width="1.3"/><circle cx="1410.0" cy="542.0" r="3.6" fill="#000"/>
<path d="M1390 538 L1404 540" fill="none" stroke="#1c1c1c" stroke-width="1.9" stroke-linejoin="round" stroke-linecap="round" />
<path d="M1353 525C1350.8 523.5 1342.8 519.5 1340 516C1337.2 512.5 1335.7 507 1336 504C1336.3 501 1340 495.8 1342 498C1344 500.2 1346.3 517.2 1348 517C1349.7 516.8 1349.8 499.2 1352 497C1354.2 494.8 1359 500.5 1361 504C1363 507.5 1364.5 514.3 1364 518C1363.5 521.7 1359 524.7 1358 526" fill="#fff" stroke="#1c1c1c" stroke-width="1.9" stroke-linejoin="round" stroke-linecap="round" />
<path d="M1353 531 L1368 544" fill="none" stroke="#1c1c1c" stroke-width="1.9" stroke-linejoin="round" stroke-linecap="round" />
<path d="M1360 528 L1373 541" fill="none" stroke="#1c1c1c" stroke-width="1.9" stroke-linejoin="round" stroke-linecap="round" />
<circle cx="1355.0" cy="527.4" r="3.2" fill="#fff" stroke="#1c1c1c" stroke-width="1.2"/>
<path d="M1443 534C1442.8 532 1440.8 525.7 1442 522C1443.2 518.3 1447.7 513.8 1450 512C1452.3 510.2 1455.5 508.3 1456 511C1456.5 513.7 1451.5 527.5 1453 528C1454.5 528.5 1462.8 514.3 1465 514C1467.2 513.7 1467.2 522.3 1466 526C1464.8 529.7 1460.8 534 1458 536C1455.2 538 1450.5 537.7 1449 538" fill="#fff" stroke="#1c1c1c" stroke-width="1.9" stroke-linejoin="round" stroke-linecap="round" />
<path d="M1441 539 L1426 549" fill="none" stroke="#1c1c1c" stroke-width="1.9" stroke-linejoin="round" stroke-linecap="round" />
<path d="M1446 543 L1432 552" fill="none" stroke="#1c1c1c" stroke-width="1.9" stroke-linejoin="round" stroke-linecap="round" />
<circle cx="1445.6" cy="537.0" r="3.2" fill="#fff" stroke="#1c1c1c" stroke-width="1.2"/>
<path d="M1365 558C1362.8 556.5 1356.5 550 1352 549C1347.5 548 1341.2 549.5 1338 552C1334.8 554.5 1333.8 562 1333 564" fill="none" stroke="#1c1c1c" stroke-width="1.9" stroke-linejoin="round" stroke-linecap="round" />
<path d="M1353.6 551.8C1351.3 552.3 1342.8 552.3 1339.6 554.8C1336.4 557.3 1335.4 564.8 1334.6 566.8" fill="none" stroke="#1c1c1c" stroke-width="1.5" stroke-linejoin="round" stroke-linecap="round" />
<path d="M1364 564C1361.7 563 1354.2 558.3 1350 558C1345.8 557.7 1341.3 560 1339 562C1336.7 564 1336.5 568.7 1336 570" fill="none" stroke="#1c1c1c" stroke-width="1.9" stroke-linejoin="round" stroke-linecap="round" />
<path d="M1351.6 560.8C1349.8 561.5 1342.9 562.8 1340.6 564.8C1338.3 566.8 1338.1 571.5 1337.6 572.8" fill="none" stroke="#1c1c1c" stroke-width="1.5" stroke-linejoin="round" stroke-linecap="round" />
<path d="M1365 570C1362.8 569.7 1355.8 567.3 1352 568C1348.2 568.7 1344.2 571.8 1342 574C1339.8 576.2 1339.5 579.8 1339 581" fill="none" stroke="#1c1c1c" stroke-width="1.9" stroke-linejoin="round" stroke-linecap="round" />
<path d="M1353.6 570.8C1351.9 571.8 1345.8 574.6 1343.6 576.8C1341.4 579 1341.1 582.6 1340.6 583.8" fill="none" stroke="#1c1c1c" stroke-width="1.5" stroke-linejoin="round" stroke-linecap="round" />
<path d="M1368 576C1366.3 576.3 1360.2 575.3 1358 578C1355.8 580.7 1355.5 589.7 1355 592" fill="none" stroke="#1c1c1c" stroke-width="1.9" stroke-linejoin="round" stroke-linecap="round" />
<path d="M1359.6 580.8 L1356.6 594.8" fill="none" stroke="#1c1c1c" stroke-width="1.5" stroke-linejoin="round" stroke-linecap="round" />
<path d="M1429 560C1430.8 559.7 1436.5 557.7 1440 558C1443.5 558.3 1447.7 559.7 1450 562C1452.3 564.3 1453.3 570.3 1454 572" fill="none" stroke="#1c1c1c" stroke-width="1.9" stroke-linejoin="round" stroke-linecap="round" />
<path d="M1441.6 560.8C1443.3 561.5 1449.3 562.5 1451.6 564.8C1453.9 567.1 1454.9 573.1 1455.6 574.8" fill="none" stroke="#1c1c1c" stroke-width="1.5" stroke-linejoin="round" stroke-linecap="round" />
<path d="M1429 567C1430.8 567.2 1436.8 566.5 1440 568C1443.2 569.5 1446.3 573.3 1448 576C1449.7 578.7 1449.7 582.7 1450 584" fill="none" stroke="#1c1c1c" stroke-width="1.9" stroke-linejoin="round" stroke-linecap="round" />
<path d="M1441.6 570.8C1442.9 572.1 1447.9 576.1 1449.6 578.8C1451.3 581.5 1451.3 585.5 1451.6 586.8" fill="none" stroke="#1c1c1c" stroke-width="1.5" stroke-linejoin="round" stroke-linecap="round" />
<path d="M1427 574C1428.5 574.8 1433.5 576.7 1436 579C1438.5 581.3 1441 585.3 1442 588C1443 590.7 1442 593.8 1442 595" fill="none" stroke="#1c1c1c" stroke-width="1.9" stroke-linejoin="round" stroke-linecap="round" />
<path d="M1437.6 581.8C1438.6 583.3 1442.6 588.1 1443.6 590.8C1444.6 593.5 1443.6 596.6 1443.6 597.8" fill="none" stroke="#1c1c1c" stroke-width="1.5" stroke-linejoin="round" stroke-linecap="round" />
<path d="M1422 581C1423.2 582.3 1427.2 586 1429 589C1430.8 592 1432.3 597.3 1433 599" fill="none" stroke="#1c1c1c" stroke-width="1.9" stroke-linejoin="round" stroke-linecap="round" />
<path d="M1430.6 591.8 L1434.6 601.8" fill="none" stroke="#1c1c1c" stroke-width="1.5" stroke-linejoin="round" stroke-linecap="round" />
<path d="M1443.8 640.4C1445.9 638.3 1454.4 645.5 1460 644.4C1465.6 643.3 1469 633.7 1470.9 635.1C1472.8 636.5 1468 646 1469.3 651.3C1470.6 656.6 1478.5 658.7 1477.4 660.6C1476.3 662.5 1466.8 658.1 1464 660.6C1461.2 663.1 1466.3 672.6 1464 672.8C1461.7 673 1458.1 662.9 1453.1 661.8C1448.1 660.7 1440.5 669 1439.8 667.5C1439.1 666 1449.1 660.2 1449.9 654.6C1450.7 649 1441.7 642.5 1443.8 640.4Z" fill="none" stroke="#1c1c1c" stroke-width="1.6" stroke-linejoin="round" stroke-linecap="round" />
<path d="M1519.5 617.3C1518.3 614.7 1517.2 611.4 1517.9 610C1518.6 608.6 1522.1 610 1523.6 609.2C1525.1 608.4 1525 605.3 1526.8 605.2C1528.5 605.1 1531.9 607.5 1534.1 608.4C1536.3 609.3 1538.7 609.2 1539.8 610.8C1540.9 612.4 1541.1 615.9 1540.6 618.1C1540 620.3 1538.3 623.1 1536.5 623.8C1534.7 624.5 1531.9 621.9 1530 622.2C1528.1 622.5 1527 626.2 1525.2 625.4C1523.5 624.6 1520.7 619.9 1519.5 617.3Z" fill="none" stroke="#1c1c1c" stroke-width="1.3" stroke-linejoin="round" stroke-linecap="round" />
<path d="M1275.8 563.5C1277.2 564.4 1281.9 567.2 1283.9 568.7C1285.9 570.2 1287.2 572.1 1287.9 572.8" fill="none" stroke="#1c1c1c" stroke-width="1.1" stroke-linejoin="round" stroke-linecap="round" />
<path d="M1308.2 573.6C1309.2 573.5 1313 571.8 1314.3 572.8C1315.6 573.8 1317 578.4 1316.3 579.7C1315.6 581.1 1311.2 580.7 1310.2 580.9" fill="none" stroke="#1c1c1c" stroke-width="1.1" stroke-linejoin="round" stroke-linecap="round" />
<path d="M1360.8 622.2C1362.2 621.9 1366.9 619.8 1368.9 620.1C1370.9 620.4 1373.7 623.2 1373 624.2C1372.3 625.2 1366.2 625.9 1364.9 626.2" fill="none" stroke="#1c1c1c" stroke-width="1.1" stroke-linejoin="round" stroke-linecap="round" />
<path d="M1482.3 610C1483.3 610.3 1486.4 611 1488.3 612C1490.2 613 1492.7 615.4 1493.6 616.1" fill="none" stroke="#1c1c1c" stroke-width="1.1" stroke-linejoin="round" stroke-linecap="round" />
<path d="M1395.2 632.3C1396.5 632.5 1400.8 632.8 1403.3 633.5C1405.8 634.2 1409 635.8 1410.2 636.3" fill="none" stroke="#1c1c1c" stroke-width="1.1" stroke-linejoin="round" stroke-linecap="round" />
<path d="M1383.1 669.9C1384.2 669.7 1387.8 668.6 1390 668.7C1392.2 668.8 1395.3 670.4 1396.4 670.7" fill="none" stroke="#1c1c1c" stroke-width="1.1" stroke-linejoin="round" stroke-linecap="round" />
<path d="M1512.6 691C1513.6 691.3 1517.2 692 1518.7 693C1520.2 694 1521.4 696.4 1521.9 697.1" fill="none" stroke="#1c1c1c" stroke-width="1.1" stroke-linejoin="round" stroke-linecap="round" />
<path d="M1318.3 624.2 L1322.3 626.2" fill="none" stroke="#1c1c1c" stroke-width="1.1" stroke-linejoin="round" stroke-linecap="round" />
<path d="M1026.8 620.1C1027.7 620.3 1031.4 620.7 1032.1 621.4C1032.8 622.1 1031.1 623.7 1030.9 624.2" fill="none" stroke="#1c1c1c" stroke-width="1.1" stroke-linejoin="round" stroke-linecap="round" />
<path d="M992.4 656.6 L997.2 658.6" fill="none" stroke="#1c1c1c" stroke-width="1.1" stroke-linejoin="round" stroke-linecap="round" />
<path d="M960 699.9C961.7 699.8 967.4 698.8 970.1 699.1C972.8 699.4 975.2 701.1 976.2 701.5" fill="none" stroke="#1c1c1c" stroke-width="1.1" stroke-linejoin="round" stroke-linecap="round" />
<path d="M1047 856.2 L1049.9 852.1" fill="none" stroke="#1c1c1c" stroke-width="1.1" stroke-linejoin="round" stroke-linecap="round" />
<path d="M1028.8 874C1030.2 873.7 1034.2 872 1036.9 872.4C1039.6 872.8 1042.4 875.5 1045 876.4C1047.6 877.3 1051.1 877.7 1052.3 878" fill="none" stroke="#1c1c1c" stroke-width="1.1" stroke-linejoin="round" stroke-linecap="round" />
<path d="M1012.6 909.6C1014 909.5 1018.8 909.3 1020.7 908.8C1022.6 908.3 1023.5 906.8 1024 906.4" fill="none" stroke="#1c1c1c" stroke-width="1.1" stroke-linejoin="round" stroke-linecap="round" />
<defs><clipPath id="cpBoard"><path d="M833 579.6C837.5 578.4 852.3 573.9 860 572.4C867.7 570.9 875.8 570.9 879 570.6L879 570.6C880.1 572 884.4 575.8 885.6 579C886.8 582.2 886.6 585.5 886 590C885.4 594.5 884 600.7 882 606C880 611.3 877.7 615.7 874 622C870.3 628.3 865.7 636 860 644C854.3 652 846.7 662 840 670C833.3 678 826.7 686 820 692C813.3 698 808 701.3 800 706C792 710.7 782 715.7 772 720C762 724.3 751 728.2 740 732C729 735.8 718.3 740.2 706 743C693.7 745.8 677 748.1 666 749C655 749.9 647.8 749.2 640 748.4C632.2 747.6 623.8 746.8 619 744.4C614.2 742 612.3 735.7 611 734L611 734C612.5 729.3 615.2 714.7 620 706C624.8 697.3 633.3 688.7 640 682C646.7 675.3 654.2 670.2 660 666C665.8 661.8 665 662.7 675 657C685 651.3 702.5 641.2 720 632C737.5 622.8 761.2 610.7 780 602C798.8 593.3 824.2 583.3 833 579.6Z"/></clipPath><linearGradient id="gBoard" gradientUnits="userSpaceOnUse" x1="630" y1="730" x2="880" y2="580"><stop offset="0" stop-color="#f2ea70"/><stop offset="0.3" stop-color="#f6e878"/><stop offset="0.5" stop-color="#f6d183"/><stop offset="0.7" stop-color="#f3b376"/><stop offset="1" stop-color="#f0a068"/></linearGradient></defs>
<g clip-path="url(#cpBoard)"><path d="M833 579.6C837.5 578.4 852.3 573.9 860 572.4C867.7 570.9 875.8 570.9 879 570.6L879 570.6C880.1 572 884.4 575.8 885.6 579C886.8 582.2 886.6 585.5 886 590C885.4 594.5 884 600.7 882 606C880 611.3 877.7 615.7 874 622C870.3 628.3 865.7 636 860 644C854.3 652 846.7 662 840 670C833.3 678 826.7 686 820 692C813.3 698 808 701.3 800 706C792 710.7 782 715.7 772 720C762 724.3 751 728.2 740 732C729 735.8 718.3 740.2 706 743C693.7 745.8 677 748.1 666 749C655 749.9 647.8 749.2 640 748.4C632.2 747.6 623.8 746.8 619 744.4C614.2 742 612.3 735.7 611 734L611 734C612.5 729.3 615.2 714.7 620 706C624.8 697.3 633.3 688.7 640 682C646.7 675.3 654.2 670.2 660 666C665.8 661.8 665 662.7 675 657C685 651.3 702.5 641.2 720 632C737.5 622.8 761.2 610.7 780 602C798.8 593.3 824.2 583.3 833 579.6Z" fill="url(#gBoard)"/><path d="M833 579.6C837.5 578.4 852.3 573.9 860 572.4C867.7 570.9 875.8 570.9 879 570.6L879 570.6C880.1 572 884.4 575.8 885.6 579C886.8 582.2 886.6 585.5 886 590C885.4 594.5 884 600.7 882 606C880 611.3 877.7 615.7 874 622C870.3 628.3 865.7 636 860 644C854.3 652 846.7 662 840 670C833.3 678 826.7 686 820 692C813.3 698 808 701.3 800 706C792 710.7 782 715.7 772 720C762 724.3 751 728.2 740 732C729 735.8 718.3 740.2 706 743C693.7 745.8 677 748.1 666 749C655 749.9 647.8 749.2 640 748.4C632.2 747.6 623.8 746.8 619 744.4C614.2 742 612.3 735.7 611 734L611 734C612.5 729.3 615.2 714.7 620 706C624.8 697.3 633.3 688.7 640 682C646.7 675.3 654.2 670.2 660 666C665.8 661.8 665 662.7 675 657C685 651.3 702.5 641.2 720 632C737.5 622.8 761.2 610.7 780 602C798.8 593.3 824.2 583.3 833 579.6Z" fill="none" stroke="#222" stroke-width="14.600"/><path d="M833 579.6C837.5 578.4 852.3 573.9 860 572.4C867.7 570.9 875.8 570.9 879 570.6L879 570.6C880.1 572 884.4 575.8 885.6 579C886.8 582.2 886.6 585.5 886 590C885.4 594.5 884 600.7 882 606C880 611.3 877.7 615.7 874 622C870.3 628.3 865.7 636 860 644C854.3 652 846.7 662 840 670C833.3 678 826.7 686 820 692C813.3 698 808 701.3 800 706C792 710.7 782 715.7 772 720C762 724.3 751 728.2 740 732C729 735.8 718.3 740.2 706 743C693.7 745.8 677 748.1 666 749C655 749.9 647.8 749.2 640 748.4C632.2 747.6 623.8 746.8 619 744.4C614.2 742 612.3 735.7 611 734L611 734C612.5 729.3 615.2 714.7 620 706C624.8 697.3 633.3 688.7 640 682C646.7 675.3 654.2 670.2 660 666C665.8 661.8 665 662.7 675 657C685 651.3 702.5 641.2 720 632C737.5 622.8 761.2 610.7 780 602C798.8 593.3 824.2 583.3 833 579.6Z" fill="none" stroke="#f3eed8" stroke-width="12"/></g>
<path d="M833 579.6C837.5 578.4 852.3 573.9 860 572.4C867.7 570.9 875.8 570.9 879 570.6L879 570.6C880.1 572 884.4 575.8 885.6 579C886.8 582.2 886.6 585.5 886 590C885.4 594.5 884 600.7 882 606C880 611.3 877.7 615.7 874 622C870.3 628.3 865.7 636 860 644C854.3 652 846.7 662 840 670C833.3 678 826.7 686 820 692C813.3 698 808 701.3 800 706C792 710.7 782 715.7 772 720C762 724.3 751 728.2 740 732C729 735.8 718.3 740.2 706 743C693.7 745.8 677 748.1 666 749C655 749.9 647.8 749.2 640 748.4C632.2 747.6 623.8 746.8 619 744.4C614.2 742 612.3 735.7 611 734L611 734C612.5 729.3 615.2 714.7 620 706C624.8 697.3 633.3 688.7 640 682C646.7 675.3 654.2 670.2 660 666C665.8 661.8 665 662.7 675 657C685 651.3 702.5 641.2 720 632C737.5 622.8 761.2 610.7 780 602C798.8 593.3 824.2 583.3 833 579.6Z" fill="none" stroke="#161616" stroke-width="2.2" stroke-linejoin="round" stroke-linecap="round" />
<path d="M632 732 L637 724" fill="none" stroke="#333" stroke-width="0.8" stroke-linejoin="round" stroke-linecap="round" />
<path d="M642 720 L668 703" fill="none" stroke="#333" stroke-width="0.8" stroke-linejoin="round" stroke-linecap="round" />
<path d="M820 619 L838 602" fill="none" stroke="#333" stroke-width="0.8" stroke-linejoin="round" stroke-linecap="round" />
<path d="M843 598 L868 582" fill="none" stroke="#333" stroke-width="0.8" stroke-linejoin="round" stroke-linecap="round" />
<path d="M645 773C645.2 769.5 646.5 763.8 649 760C651.5 756.2 656.7 752.3 660 750C663.3 747.7 661.5 747.7 669 746.4C676.5 745.1 699.5 740.5 705 742.4C710.5 744.3 704.5 753.3 702 758C699.5 762.7 694.7 765.9 690 770.4C685.3 774.9 679 782.5 674 785.2C669 787.9 664.3 787.3 660 786.6C655.7 785.9 650.5 783.5 648 781.2C645.5 778.9 644.8 776.5 645 773Z" fill="#a9adb8" stroke="#5a5d66" stroke-width="1.2" stroke-linejoin="round" stroke-linecap="round" />
<path d="M772.4 748C766.2 750.2 772.2 758.8 775 764C777.8 769.2 783.8 774.4 789 779C794.2 783.6 800.8 789.5 806 791.6C811.2 793.7 815.8 793 820 791.6C824.2 790.2 828.9 786.6 831 783C833.1 779.4 833.4 773.8 832.4 770C831.4 766.2 828.4 763.2 825 760C821.6 756.8 820.8 753 812 751C803.2 749 778.6 745.8 772.4 748Z" fill="#a9adb8" stroke="#5a5d66" stroke-width="1.2" stroke-linejoin="round" stroke-linecap="round" />
<path d="M683 700C682.5 703.3 681.3 713.3 680 720C678.7 726.7 677 735.2 675 740C673 744.8 671.6 745.6 668 749C664.4 752.4 656.7 756.6 653.6 760.4C650.5 764.2 649.5 768.8 649.4 772C649.3 775.2 650.8 777.9 653 779.6C655.2 781.3 659.1 782.3 662.4 782.4C665.7 782.5 668.8 782.7 673 780.4C677.2 778.1 683.3 772.2 687.6 768.4C691.9 764.6 696 761.7 698.6 757.6C701.2 753.5 702 749.6 703.2 744C704.4 738.4 704.9 730.9 706 724C707.1 717.1 709.3 706 710 702.4Z" fill="#e9c49b" stroke="#4a4a4a" stroke-width="1" stroke-linejoin="round" stroke-linecap="round" />
<path d="M770 704C770.3 707.3 771 718 772 724C773 730 775.5 735.7 776 740C776.5 744.3 774.6 746.2 775.2 750C775.8 753.8 776.5 758.5 779.4 762.8C782.3 767.1 787.6 771.7 792.4 775.6C797.2 779.5 803.6 784.4 808 786.4C812.4 788.4 815.7 788.6 818.8 787.6C821.9 786.6 825 783.2 826.6 780.6C828.2 778 829.4 775.2 828.6 772C827.8 768.8 824.4 764.3 821.6 761.2C818.8 758.1 814.9 756.9 812 753.4C809.1 749.9 806.3 744.9 804 740C801.7 735.1 799.5 730.1 798 724C796.5 717.9 795.5 707 795 703.6Z" fill="#e9c49b" stroke="#4a4a4a" stroke-width="1" stroke-linejoin="round" stroke-linecap="round" />
<path d="M667 748.4 L668 768.4 L657.6 780" fill="none" stroke="#5a5d66" stroke-width="1.6" stroke-linejoin="round" stroke-linecap="round" />
<path d="M668 768.4 L691 769" fill="none" stroke="#5a5d66" stroke-width="1.6" stroke-linejoin="round" stroke-linecap="round" />
<path d="M809.6 753 L810.4 774 L820 787" fill="none" stroke="#5a5d66" stroke-width="1.6" stroke-linejoin="round" stroke-linecap="round" />
<path d="M810.4 774 L787 774.4" fill="none" stroke="#5a5d66" stroke-width="1.6" stroke-linejoin="round" stroke-linecap="round" />
<path d="M651 764 L655 767" fill="none" stroke="#333" stroke-width="1" stroke-linejoin="round" stroke-linecap="round" />
<path d="M650 769.6 L655 771" fill="none" stroke="#333" stroke-width="1" stroke-linejoin="round" stroke-linecap="round" />
<path d="M652.4 775 L657 775" fill="none" stroke="#333" stroke-width="1" stroke-linejoin="round" stroke-linecap="round" />
<path d="M822 770 L827 768.4" fill="none" stroke="#333" stroke-width="1" stroke-linejoin="round" stroke-linecap="round" />
<path d="M820 775 L826 775" fill="none" stroke="#333" stroke-width="1" stroke-linejoin="round" stroke-linecap="round" />
<path d="M818.4 779.6 L823.6 781" fill="none" stroke="#333" stroke-width="1" stroke-linejoin="round" stroke-linecap="round" />
<path d="M683 613C683.1 614.2 684.3 615.5 683.6 620C682.9 624.5 680.4 633.3 679 640C677.6 646.7 676.3 651.7 675 660C673.7 668.3 671.7 685 671 690L671 690C674.8 691.6 686.1 697.5 694 699.6C701.9 701.7 714.3 701.9 718.4 702.4L718.4 702.4C719 698.7 720.1 688.7 722 680C723.9 671.3 727.3 658 730 650C732.7 642 736.7 635 738 632L738 632C739.3 636.7 743.2 648.7 746 660C748.8 671.3 753.5 693.3 755 700L755 700C759.2 700.7 771.5 704.3 780 704C788.5 703.7 801.7 699 806 698L806 698C805 691.7 802.2 673 800 660C797.8 647 794.4 627.8 793 620C791.6 612.2 791.8 614.2 791.6 613Z" fill="#1b1a5c" stroke="#161616" stroke-width="1.6" stroke-linejoin="round" stroke-linecap="round" />
<path d="M738 619 L736 630 L738 632" fill="none" stroke="#0a0a20" stroke-width="1.5" stroke-linejoin="round" stroke-linecap="round" />
<path d="M685 625C685.5 627.8 684.5 636.5 688 642C691.5 647.5 701 652.7 706 658C711 663.3 715.6 668.8 718 674C720.4 679.2 720 686.5 720.4 689" fill="none" stroke="#101030" stroke-width="4.2" stroke-linejoin="round" stroke-linecap="round" />
<path d="M685 625C685.5 627.8 684.5 636.5 688 642C691.5 647.5 701 652.7 706 658C711 663.3 715.6 668.8 718 674C720.4 679.2 720 686.5 720.4 689" fill="none" stroke="#f2d23a" stroke-width="2.7" stroke-linejoin="round" stroke-linecap="round" />
<path d="M677 662C678.2 664.3 681.3 671.7 684 676C686.7 680.3 691.1 684.3 693 688C694.9 691.7 694.8 696.7 695.2 698.4" fill="none" stroke="#101030" stroke-width="4.2" stroke-linejoin="round" stroke-linecap="round" />
<path d="M677 662C678.2 664.3 681.3 671.7 684 676C686.7 680.3 691.1 684.3 693 688C694.9 691.7 694.8 696.7 695.2 698.4" fill="none" stroke="#f2d23a" stroke-width="2.7" stroke-linejoin="round" stroke-linecap="round" />
<path d="M791 625C790.5 627.2 791.5 633.5 788 638C784.5 642.5 775 647.3 770 652C765 656.7 760.7 660.2 758 666C755.3 671.8 754.7 683.5 754 687" fill="none" stroke="#101030" stroke-width="4.2" stroke-linejoin="round" stroke-linecap="round" />
<path d="M791 625C790.5 627.2 791.5 633.5 788 638C784.5 642.5 775 647.3 770 652C765 656.7 760.7 660.2 758 666C755.3 671.8 754.7 683.5 754 687" fill="none" stroke="#f2d23a" stroke-width="2.7" stroke-linejoin="round" stroke-linecap="round" />
<path d="M797 660C796.2 662 795.2 668 792 672C788.8 676 781.1 679.1 778 684C774.9 688.9 774 698.7 773.2 701.6" fill="none" stroke="#101030" stroke-width="4.2" stroke-linejoin="round" stroke-linecap="round" />
<path d="M797 660C796.2 662 795.2 668 792 672C788.8 676 781.1 679.1 778 684C774.9 688.9 774 698.7 773.2 701.6" fill="none" stroke="#f2d23a" stroke-width="2.7" stroke-linejoin="round" stroke-linecap="round" />
<defs><clipPath id="cpRing"><path d="M627 592C627.2 587.2 630.8 580.7 635 577C639.2 573.3 644.5 571.4 652 570C659.5 568.6 667 568.7 680 568.4C693 568.1 713.2 568.1 730 568C746.8 567.9 769.3 567.8 781 568C792.7 568.2 793.5 567.7 800 569C806.5 570.3 814.7 572.8 820 576C825.3 579.2 829.8 584.6 832 588C834.2 591.4 834 593.3 833 596.4C832 599.5 829.8 603.6 826 606.4C822.2 609.2 817.7 611.2 810 613C802.3 614.8 793.3 616.1 780 617C766.7 617.9 746 618.6 730 618.4C714 618.2 697 616.9 684 616C671 615.1 660.3 614.7 652 613C643.7 611.3 638.2 609.5 634 606C629.8 602.5 626.8 596.8 627 592Z"/></clipPath></defs>
<g clip-path="url(#cpRing)"><path d="M627 592C627.2 587.2 630.8 580.7 635 577C639.2 573.3 644.5 571.4 652 570C659.5 568.6 667 568.7 680 568.4C693 568.1 713.2 568.1 730 568C746.8 567.9 769.3 567.8 781 568C792.7 568.2 793.5 567.7 800 569C806.5 570.3 814.7 572.8 820 576C825.3 579.2 829.8 584.6 832 588C834.2 591.4 834 593.3 833 596.4C832 599.5 829.8 603.6 826 606.4C822.2 609.2 817.7 611.2 810 613C802.3 614.8 793.3 616.1 780 617C766.7 617.9 746 618.6 730 618.4C714 618.2 697 616.9 684 616C671 615.1 660.3 614.7 652 613C643.7 611.3 638.2 609.5 634 606C629.8 602.5 626.8 596.8 627 592Z" fill="#fff"/><path d="M651 566C650.4 570 647.3 581.7 647.4 590C647.5 598.3 650.9 611.7 651.6 616L620.0 616.0L620.0 566.0Z" fill="#e8484d" stroke="#161616" stroke-width="1.2" stroke-linejoin="round" stroke-linecap="round" /><path d="M688 566C687.3 571.3 684.3 589 684 598C683.7 607 686 616.3 686.4 620L715.6 620C715 616.3 712.8 607 712 598C711.2 589 711.2 571.3 711 566Z" fill="#e8484d" stroke="#161616" stroke-width="1.2" stroke-linejoin="round" stroke-linecap="round" /><path d="M753.6 566C754.1 571.3 756 589 756.4 598C756.8 607 756.1 616.3 756 620L787 620C787 615.7 787.8 603 787.2 594C786.6 585 784.2 570.7 783.6 566Z" fill="#e8484d" stroke="#161616" stroke-width="1.2" stroke-linejoin="round" stroke-linecap="round" /><path d="M811 566C812.1 570 816.8 581.7 817.4 590C818 598.3 815.1 611.7 814.6 616L840.0 616.0L840.0 566.0Z" fill="#e8484d" stroke="#161616" stroke-width="1.2" stroke-linejoin="round" stroke-linecap="round" /></g>
<path d="M627 592C627.2 587.2 630.8 580.7 635 577C639.2 573.3 644.5 571.4 652 570C659.5 568.6 667 568.7 680 568.4C693 568.1 713.2 568.1 730 568C746.8 567.9 769.3 567.8 781 568C792.7 568.2 793.5 567.7 800 569C806.5 570.3 814.7 572.8 820 576C825.3 579.2 829.8 584.6 832 588C834.2 591.4 834 593.3 833 596.4C832 599.5 829.8 603.6 826 606.4C822.2 609.2 817.7 611.2 810 613C802.3 614.8 793.3 616.1 780 617C766.7 617.9 746 618.6 730 618.4C714 618.2 697 616.9 684 616C671 615.1 660.3 614.7 652 613C643.7 611.3 638.2 609.5 634 606C629.8 602.5 626.8 596.8 627 592Z" fill="none" stroke="#161616" stroke-width="2" stroke-linejoin="round" stroke-linecap="round" />
<path d="M710.4 438C710.7 439.7 713.7 445.7 712 448C710.3 450.3 704.3 450.6 700 452C695.7 453.4 690 454.4 686 456.4C682 458.4 679.3 460.4 676 464C672.7 467.6 664 473.7 666 478C668 482.3 683.7 484.7 688 490C692.3 495.3 691.1 501.7 692 510C692.9 518.3 693.3 530.7 693.2 540C693.1 549.3 691.3 560.1 691.2 566C691.1 571.9 692.2 573.8 692.4 575.4L692.4 575.4C698.7 576 715.3 579.4 730 579.2C744.7 579 772.2 575.2 780.6 574.4L780.6 574.4C780.5 573 780.8 571.7 780 566C779.2 560.3 776.7 549.3 776 540C775.3 530.7 775.5 518.5 776 510C776.5 501.5 775.5 495.7 779 489C782.5 482.3 794.8 474.2 797 470C799.2 465.8 794.2 466.3 792 464C789.8 461.7 788.3 458.7 784 456.4C779.7 454.1 771.7 451.7 766 450C760.3 448.3 752.7 448.1 750 446C747.3 443.9 749.7 438.7 749.6 437.2Z" fill="#e9c49b" stroke="none" stroke-width="0" stroke-linejoin="round" stroke-linecap="round" />
<path d="M779 489C781 497 787.8 507.2 792 514C796.2 520.8 800 526.3 804 530C808 533.7 811.7 536.7 816 536.4C820.3 536.1 822.7 533.4 830 528C837.3 522.6 851.7 510.5 860 504C868.3 497.5 875 492.7 880 489C885 485.3 887.7 484.5 890 482C892.3 479.5 893.4 475.8 894 474C894.6 472.2 894.4 472.9 893.6 471C892.8 469.1 891.3 464.2 889 462.4C886.7 460.6 883.2 459.8 880 460C876.8 460.2 872.3 461.7 870 463.6C867.7 465.5 866.4 469.7 866.4 471.6C866.4 473.5 874.4 472.1 870 475C865.6 477.9 848.6 484.8 840 489C831.4 493.2 823.4 499.8 818.4 500C813.4 500.2 813.6 495 810 490C806.4 485 800 474.3 797 470C794 465.7 794.8 464.7 792 464C789.2 463.3 782.2 461.8 780 466C777.8 470.2 777 481 779 489Z" fill="#e9c49b" stroke="none" stroke-width="0" stroke-linejoin="round" stroke-linecap="round" />
<path d="M686 456.4C684 452.1 679.3 460.4 676 464C672.7 467.6 670.7 472 666 478C661.3 484 651.7 494.3 648 500C644.3 505.7 643.7 507.4 644 512.4C644.3 517.4 647.7 523.7 650 530C652.3 536.3 656.1 543.3 658 550C659.9 556.7 660.4 564.5 661.6 570C662.8 575.5 662.7 579.3 665 583C667.3 586.7 671.8 591.2 675.6 592.4C679.4 593.6 685.4 592.6 688 590.4C690.6 588.2 691.1 582.7 691.2 579C691.3 575.3 689.9 570.9 688.8 568.4C687.7 565.9 685.9 567.1 684.4 564C682.9 560.9 682 557.9 680 550C678 542.1 673.7 522.6 672.4 516.4C671.1 510.2 669.8 517.2 672.4 512.8C675 508.4 685.7 499.4 688 490C690.3 480.6 688 460.7 686 456.4Z" fill="#e9c49b" stroke="none" stroke-width="0" stroke-linejoin="round" stroke-linecap="round" />
<path d="M711.2 438.4C711.3 440 713.9 445.7 712 448C710.1 450.3 704.3 450.6 700 452C695.7 453.4 690 454.4 686 456.4C682 458.4 679.3 460.4 676 464C672.7 467.6 670.7 472 666 478C661.3 484 651.7 494.3 648 500C644.3 505.7 643.7 507.4 644 512.4C644.3 517.4 647.7 523.7 650 530C652.3 536.3 656.1 543.3 658 550C659.9 556.7 660.4 564.5 661.6 570C662.8 575.5 664.4 580.8 665 583" fill="none" stroke="#161616" stroke-width="1.9" stroke-linejoin="round" stroke-linecap="round" />
<path d="M665 583C665.7 584.2 667.2 588.4 669 590C670.8 591.6 672.4 592.3 675.6 592.4C678.8 592.5 685.4 592.6 688 590.4C690.6 588.2 691.1 582.7 691.2 579C691.3 575.3 689.2 570.2 688.8 568.4" fill="none" stroke="#161616" stroke-width="1.9" stroke-linejoin="round" stroke-linecap="round" />
<path d="M688.8 568.4C688.1 567.7 685.9 567.1 684.4 564C682.9 560.9 682 557.9 680 550C678 542.1 673.7 522 672.4 516.4" fill="none" stroke="#161616" stroke-width="1.9" stroke-linejoin="round" stroke-linecap="round" />
<path d="M659.6 512.8C661.2 512.9 666.8 513 669 513.6C671.2 514.2 672.2 515.9 672.8 516.4" fill="none" stroke="#161616" stroke-width="1.9" stroke-linejoin="round" stroke-linecap="round" />
<path d="M688 490 L672.4 512.8" fill="none" stroke="#161616" stroke-width="1.9" stroke-linejoin="round" stroke-linecap="round" />
<path d="M688 490C688.7 493.3 691.1 501.7 692 510C692.9 518.3 693.3 530.7 693.2 540C693.1 549.3 691.3 560.1 691.2 566C691.1 571.9 685.9 573.2 692.4 575.4C698.9 577.6 715.3 579.4 730 579.2C744.7 579 772.3 576.6 780.6 574.4C788.9 572.2 780.8 571.7 780 566C779.2 560.3 776.7 549.3 776 540C775.3 530.7 775.5 518.5 776 510C776.5 501.5 778.5 492.5 779 489" fill="none" stroke="#161616" stroke-width="1.9" stroke-linejoin="round" stroke-linecap="round" />
<path d="M749.6 437.6C749.7 439 747.3 443.9 750 446C752.7 448.1 760.3 448.3 766 450C771.7 451.7 779.7 454.1 784 456.4C788.3 458.7 789.3 460.7 792 464C794.7 467.3 797 471.7 800 476C803 480.3 806.9 486 810 490C813.1 494 817 498.3 818.4 500" fill="none" stroke="#161616" stroke-width="1.9" stroke-linejoin="round" stroke-linecap="round" />
<path d="M818.4 500C822 498.2 831.4 493.2 840 489C848.6 484.8 865.6 477.9 870 475C874.4 472.1 867 472.2 866.4 471.6" fill="none" stroke="#161616" stroke-width="1.9" stroke-linejoin="round" stroke-linecap="round" />
<path d="M779 489C781.2 493.2 787.8 507.2 792 514C796.2 520.8 800 526.3 804 530C808 533.7 811.7 536.7 816 536.4C820.3 536.1 822.7 533.4 830 528C837.3 522.6 851.7 510.5 860 504C868.3 497.5 875 492.7 880 489C885 485.3 888.3 483.2 890 482" fill="none" stroke="#161616" stroke-width="1.9" stroke-linejoin="round" stroke-linecap="round" />
<path d="M667 582C667.7 583 669.3 586.7 671 588C672.7 589.3 676 589.7 677 590" fill="none" stroke="#161616" stroke-width="1.1" stroke-linejoin="round" stroke-linecap="round" />
<path d="M672 579C672.8 580.2 675.2 584.5 677 586C678.8 587.5 682 587.7 683 588" fill="none" stroke="#161616" stroke-width="1.1" stroke-linejoin="round" stroke-linecap="round" />
<path d="M679 576C679.8 577 682.5 580.5 684 582C685.5 583.5 687.3 584.5 688 585" fill="none" stroke="#161616" stroke-width="1.1" stroke-linejoin="round" stroke-linecap="round" />
<path d="M704 456C706.3 456.2 715 456.3 718 457.2C721 458.1 721.3 460.5 722 461.2" fill="none" stroke="#333" stroke-width="1.1" stroke-linejoin="round" stroke-linecap="round" />
<path d="M740 460C741 459.5 742.7 457.9 746 457.2C749.3 456.5 757.7 456.2 760 456" fill="none" stroke="#333" stroke-width="1.1" stroke-linejoin="round" stroke-linecap="round" />
<ellipse cx="711.0" cy="506.0" rx="1.4" ry="2" fill="#3a2418"/>
<ellipse cx="755.6" cy="506.0" rx="1.4" ry="2" fill="#3a2418"/>
<path d="M734.4 562.4C734.7 562.8 735.9 564.1 736 565C736.1 565.9 735 567.2 734.8 567.6" fill="none" stroke="#222" stroke-width="1.3" stroke-linejoin="round" stroke-linecap="round" />
<path d="M681 376C679.8 375.8 676 374.8 674 375C672 375.2 670.1 375.9 669 377.2C667.9 378.5 667.3 380.7 667.5 383C667.7 385.3 668.6 388.6 670 391C671.4 393.4 674.2 395.8 676 397.2C677.8 398.6 680.2 399.1 681 399.5" fill="#e9c49b" stroke="#161616" stroke-width="1.9" stroke-linejoin="round" stroke-linecap="round" />
<path d="M777.5 375C778.8 374.8 783.2 373.2 785 374C786.8 374.8 788.2 377.7 788.5 380C788.8 382.3 788.1 385.6 787 388C785.9 390.4 783.8 392.6 782 394.2C780.2 395.8 777.4 396.9 776.5 397.5" fill="#e9c49b" stroke="#161616" stroke-width="1.9" stroke-linejoin="round" stroke-linecap="round" />
<path d="M673.5 382C673.4 382.7 672.7 384.7 673 386C673.3 387.3 675.1 389.3 675.5 390" fill="none" stroke="#161616" stroke-width="1.2" stroke-linejoin="round" stroke-linecap="round" />
<path d="M784 380C784 380.8 784.5 383.5 784 385C783.5 386.5 781.5 388.3 781 389" fill="none" stroke="#161616" stroke-width="1.2" stroke-linejoin="round" stroke-linecap="round" />
<path d="M680 378C678.8 387.3 678.7 389.3 679 394C679.3 398.7 680.5 402 682 406C683.5 410 685.3 414 688 418C690.7 422 694.3 426.5 698 430C701.7 433.5 705.7 436.7 710 439C714.3 441.3 719.7 443 724 444C728.3 445 732 445.6 736 445C740 444.4 744 442.9 748 440.4C752 437.9 756.3 434.1 760 430C763.7 425.9 767.2 420.7 770 416C772.8 411.3 775.3 407 777 402C778.7 397 779.7 390.3 780 386C780.3 381.7 780 384 779 376C778 368 782.2 346 774 338C765.8 330 744.7 328 730 328C715.3 328 694.3 329.7 686 338C677.7 346.3 681.2 368.7 680 378Z" fill="#e9c49b" stroke="none" stroke-width="0" stroke-linejoin="round" stroke-linecap="round" />
<path d="M679.6 394C680 396 680.6 402 682 406C683.4 410 685.3 414 688 418C690.7 422 694.3 426.5 698 430C701.7 433.5 705.7 436.7 710 439C714.3 441.3 719.7 443 724 444C728.3 445 732 445.6 736 445C740 444.4 744 442.9 748 440.4C752 437.9 756.3 434.1 760 430C763.7 425.9 767.2 420.7 770 416C772.8 411.3 775.5 405.7 777 402C778.5 398.3 778.7 395.3 779 394" fill="none" stroke="#161616" stroke-width="1.9" stroke-linejoin="round" stroke-linecap="round" />
<path d="M680.6 381.6 L680.1 381.5 L679.4 381.3 L678.8 381.1 L678.2 380.7 L677.9 380.2 L677.8 379.3 L677.9 378.3 L677.3 377.8 L676.3 377.5 L675.6 377 L675.3 376.2 L675.3 375.1 L675.3 374.1 L674.2 373.8 L673.4 373.3 L673 372.6 L673 371.8 L673.3 370.9 L673.1 370.2 L672.3 369.7 L671.6 369.2 L671.3 368.5 L671.4 367.7 L671.7 366.9 L672 366.1 L671.2 365.5 L670.5 364.9 L670.2 364.3 L670.3 363.5 L670.7 362.7 L671.3 361.9 L670.7 361.2 L670 360.5 L669.8 359.8 L669.9 359 L670.3 358.3 L671 357.7 L670.9 357 L670.4 356.2 L670.1 355.4 L670.2 354.7 L670.7 354 L671.5 353.4 L671.7 352.7 L671.2 351.8 L670.9 351 L671.1 350.3 L671.6 349.6 L672.4 349 L672.7 348.4 L672.2 347.5 L672 346.8 L672 346.1 L672.3 345.5 L672.9 345 L673.9 344.3 L673.3 343.4 L672.9 342.5 L672.9 341.7 L673.2 341.1 L673.9 340.5 L674.7 340 L674.3 339.2 L673.9 338.4 L673.8 337.6 L674.1 336.9 L674.7 336.4 L675.6 335.9 L675.7 335.1 L675.5 334.3 L675.4 333.5 L675.7 332.8 L676.3 332.4 L677.2 332 L677.9 331.6 L677.7 330.6 L677.7 329.7 L678 329 L678.6 328.5 L679.5 328.2 L680.3 327.7 L680.1 326.8 L680.1 325.9 L680.3 325.2 L680.9 324.8 L681.6 324.5 L682.4 324.3 L682.5 323.3 L682.4 322.2 L682.7 321.4 L683.3 320.9 L684.3 320.5 L685 320.2 L684.8 319.2 L684.8 318.3 L685.1 317.6 L685.7 317.2 L686.5 316.9 L687.4 316.9 L687.7 316 L687.8 315.1 L688.2 314.4 L688.9 314 L689.8 314 L690.7 314.2 L691.2 313.6 L691.5 312.6 L691.9 311.9 L692.6 311.5 L693.3 311.4 L694.2 311.4 L694.8 311 L694.8 310 L695 309.2 L695.5 308.7 L696.2 308.4 L697.1 308.3 L698 308.2 L698.1 307.2 L698.4 306.3 L699 305.8 L699.7 305.6 L700.6 305.7 L701.5 306 L701.9 305.2 L702.3 304.4 L702.8 303.9 L703.5 303.7 L704.4 303.8 L705.3 304.2 L706 303.9 L706.5 303 L707.1 302.5 L707.8 302.3 L708.6 302.4 L709.4 302.9 L710.1 303 L710.7 302.2 L711.4 301.7 L712.2 301.5 L712.9 301.7 L713.7 302.3 L714.4 302.8 L715.2 302.1 L715.9 301.6 L716.7 301.5 L717.4 301.7 L718.1 302.2 L718.8 302.8 L719.4 302.2 L719.9 301.6 L720.6 301.1 L721.4 301 L722.2 301.2 L723.2 301.5 L723.7 300.9 L724 300.1 L724.6 299.5 L725.3 299.2 L726.2 299.4 L727.1 299.9 L727.7 299.8 L728.4 299 L729.1 298.6 L729.9 298.5 L730.8 298.9 L731.6 299.7 L732.4 299.3 L733.2 298.7 L734 298.5 L734.7 298.7 L735.4 299.2 L735.9 300 L736.7 299.9 L737.7 299.6 L738.5 299.6 L739.1 300 L739.5 300.7 L739.8 301.7 L740.4 302.1 L741.4 301.8 L742.3 301.9 L742.9 302.1 L743.4 302.7 L743.7 303.5 L744.3 304.1 L745.2 303.8 L746.1 303.6 L746.8 303.8 L747.4 304.3 L747.8 305.2 L748.4 305.9 L749.4 305.5 L750.3 305.4 L750.9 305.6 L751.5 306.1 L751.9 306.8 L752.3 307.8 L753.2 307.4 L754.1 307.2 L754.9 307.3 L755.5 307.7 L755.9 308.4 L756.3 309.4 L757.1 309.3 L758 309.1 L758.7 309.1 L759.3 309.4 L759.9 310.1 L760.3 311 L761 311.3 L761.9 311.1 L762.8 311.1 L763.4 311.4 L763.9 312.1 L764.2 313 L764.6 313.6 L765.5 313.4 L766.4 313.5 L767 313.9 L767.4 314.6 L767.5 315.5 L767.5 316.5 L768.4 316.6 L769.3 316.8 L769.9 317.2 L770.3 317.9 L770.3 318.7 L770.2 319.7 L770.8 320.2 L771.7 320.4 L772.4 320.8 L772.7 321.5 L772.8 322.3 L772.5 323.3 L772.8 324 L773.7 324.3 L774.5 324.7 L774.9 325.4 L774.9 326.2 L774.8 327.1 L775 327.9 L775.9 328.1 L776.7 328.3 L777.3 328.8 L777.5 329.6 L777.5 330.5 L777.6 331.4 L778.6 331.6 L779.4 331.9 L780 332.4 L780.2 333.1 L780.1 334 L779.7 334.9 L780.4 335.4 L781.2 336 L781.7 336.6 L781.7 337.4 L781.4 338.2 L780.8 339.1 L781.4 339.7 L782.1 340.4 L782.6 341.1 L782.6 341.9 L782.3 342.6 L781.8 343.5 L782.3 344.1 L783 344.6 L783.5 345.3 L783.6 346 L783.4 346.8 L782.9 347.6 L783.1 348.4 L783.9 348.9 L784.4 349.5 L784.6 350.2 L784.5 350.9 L784 351.8 L783.7 352.6 L784.6 353.2 L785.1 353.9 L785.4 354.6 L785.2 355.4 L784.7 356.1 L784.2 356.9 L785 357.6 L785.5 358.3 L785.7 359 L785.6 359.8 L785 360.5 L784.2 361.1 L784.7 361.9 L785.2 362.8 L785.3 363.5 L785 364.3 L784.4 364.9 L783.6 365.5 L783.9 366.3 L784.4 367.1 L784.6 367.8 L784.5 368.5 L784 369.2 L783.3 369.8 L783.2 370.5 L783.8 371.2 L784.1 372 L784.1 372.7 L783.7 373.4 L782.9 374 L782.1 374.4 L782.6 375.4 L782.8 376.3 L782.7 377.2 L782 377.8 L781 378.3 L780.7 379.1 L781 380 L781.1 380.8 L780.8 381.4 L780.4 381.8 L780 382.1L779.8 382 L776.5 368.5 L770.5 372 L774 360 L769 349.5 L765 352.5 L761.5 338.5 L751 349 L742.8 337 L738.5 357.5 L711.8 336 L710 350 L697 343 L692.5 356.5 L687.5 354 L685.5 372.5 L681.5 370 L680 382Z" fill="#582222" stroke="#1a0a0a" stroke-width="1.6" stroke-linejoin="round" stroke-linecap="round" />
<ellipse cx="706.5" cy="384.3" rx="10.5" ry="8" fill="#fff"/>
<ellipse cx="706.5" cy="383.8" rx="8" ry="7.6" fill="#1d1d22"/>
<ellipse cx="708.0" cy="387.8" rx="4" ry="2.2" fill="#6d8294" opacity="0.8"/>
<circle cx="703.3" cy="381.0" r="2.7" fill="#fff"/>
<ellipse cx="751.0" cy="382.7" rx="10.5" ry="8" fill="#fff"/>
<ellipse cx="751.0" cy="382.2" rx="8" ry="7.6" fill="#1d1d22"/>
<ellipse cx="752.5" cy="386.2" rx="4" ry="2.2" fill="#6d8294" opacity="0.8"/>
<circle cx="747.5" cy="380.8" r="2.7" fill="#fff"/>
<path d="M694.5 382.2C695.2 381.4 697.1 378.7 699 377.5C700.9 376.3 703.7 374.9 706 375C708.3 375.1 710.8 376.3 713 378C715.2 379.7 718 383.8 719 385" fill="none" stroke="#111" stroke-width="2" stroke-linejoin="round" stroke-linecap="round" />
<path d="M739 384.2C739.8 383 742.2 378.7 744 377C745.8 375.3 747.8 374.5 750 374.2C752.2 373.9 754.8 374 757 375C759.2 376 762.2 379.2 763.2 380" fill="none" stroke="#111" stroke-width="2" stroke-linejoin="round" stroke-linecap="round" />
<path d="M699 365C700 364.6 702.5 362.8 705 362.6C707.5 362.4 711.5 362.9 714 364C716.5 365.1 719 368.6 720 369.5" fill="none" stroke="#111" stroke-width="1.6" stroke-linejoin="round" stroke-linecap="round" />
<path d="M739 369.5C740 368.6 742.5 365.1 745 364C747.5 362.9 751.5 362.4 754 362.6C756.5 362.8 759 364.6 760 365" fill="none" stroke="#111" stroke-width="1.6" stroke-linejoin="round" stroke-linecap="round" />
<path d="M725 399C725.8 399.4 728.3 401.2 730 401.2C731.7 401.2 734.2 399.4 735 399" fill="none" stroke="#111" stroke-width="1.3" stroke-linejoin="round" stroke-linecap="round" />
<path d="M709 413C710.8 413.7 715.5 416.3 720 417.2C724.5 418.1 731 418.7 736 418.2C741 417.7 747.7 414.7 750 414" fill="none" stroke="#111" stroke-width="1.6" stroke-linejoin="round" stroke-linecap="round" />
<path d="M844 420.5C845.3 419.8 849.3 418.6 852 416C854.7 413.4 857 408.5 860 405C863 401.5 866.7 397.8 870 395C873.3 392.2 877.2 389.6 880 388C882.8 386.4 884.7 385.5 887 385.5C889.3 385.5 892 386.6 894 388C896 389.4 898 392.3 899 394C900 395.7 899.3 397 900 398C900.7 399 903 399.2 903 400C903 400.8 900.7 401.8 900 403C899.3 404.2 899.2 406.3 899 407" fill="none" stroke="#222" stroke-width="1.1" stroke-linejoin="round" stroke-linecap="round" />
<path d="M852 417C853.3 415.8 857 412.7 860 410C863 407.3 866.8 403.2 870 401C873.2 398.8 876.5 397.7 879 396.5C881.5 395.3 883.3 394.2 885 394C886.7 393.8 888.2 394.2 889 395C889.8 395.8 890.5 397.8 890 399C889.5 400.2 887.2 401.9 886 402C884.8 402.1 883.2 400.4 883 399.5C882.8 398.6 884.7 397 885 396.5" fill="none" stroke="#222" stroke-width="1.1" stroke-linejoin="round" stroke-linecap="round" />
<path d="M868 412C868.7 411 870.3 407.7 872 406C873.7 404.3 877 402.7 878 402" fill="none" stroke="#222" stroke-width="1.1" stroke-linejoin="round" stroke-linecap="round" />
<path d="M800 412.5C803.3 412.8 813.3 413.4 820 414C826.7 414.6 835.3 416.2 840 416C844.7 415.8 845.3 414.8 848 413C850.7 411.2 853.3 407.7 856 405C858.7 402.3 861.3 399.2 864 397C866.7 394.8 870.7 392.8 872 392" fill="none" stroke="#222" stroke-width="1.1" stroke-linejoin="round" stroke-linecap="round" />
<path d="M800 441C802 441.1 808.2 441.8 812 441.5C815.8 441.2 821.2 439.4 823 439" fill="none" stroke="#222" stroke-width="1.1" stroke-linejoin="round" stroke-linecap="round" />
<path d="M800 434 L807 434" fill="none" stroke="#222" stroke-width="1.1" stroke-linejoin="round" stroke-linecap="round" />
<path d="M823.5 444C823.1 444.8 821.2 447.2 821 449C820.8 450.8 821.3 453.2 822.5 455C823.7 456.8 826.1 458.9 828 460C829.9 461.1 833 461.2 834 461.5" fill="none" stroke="#444" stroke-width="1.4" stroke-linejoin="round" stroke-linecap="round" stroke-dasharray="3 1.5"/>
<path d="M867 471C865.7 468.7 868.5 465.7 870 464.4C871.5 463.1 874.6 464.2 876 463.2C877.4 462.2 876.7 459.4 878.4 458.4C880.1 457.4 884.1 456.2 886.4 457.2C888.7 458.2 891.1 461.6 892.4 464.4C893.7 467.2 894.4 471.2 894 474C893.6 476.8 892 479.7 890 481.2C888 482.7 884 483.7 882 483.2C880 482.7 880.5 480 878 478C875.5 476 868.3 473.3 867 471Z" fill="#e9c49b" stroke="#161616" stroke-width="1.9" stroke-linejoin="round" stroke-linecap="round" />
<path d="M869 458 L868 454 L879 448 L880.5 451.5 L885 461 L890 471 L887 480 L879 480 L874.5 468Z" fill="#e7bf3e" stroke="#161616" stroke-width="1.5" stroke-linejoin="round" stroke-linecap="round" />
<path d="M878.4 470C880 469.3 885.6 466 888 466C890.4 466 892.1 468 893 470C893.9 472 894.4 476.1 893.6 478C892.8 479.9 890.3 480.9 888 481.6C885.7 482.3 881.3 482.3 880 482.4" fill="#e9c49b" stroke="#161616" stroke-width="1.4" stroke-linejoin="round" stroke-linecap="round" />
<path d="M879 474 L885 471.6" fill="none" stroke="#161616" stroke-width="1.1" stroke-linejoin="round" stroke-linecap="round" />
<path d="M880 478 L886 476" fill="none" stroke="#161616" stroke-width="1.1" stroke-linejoin="round" stroke-linecap="round" />
<circle cx="888.0" cy="452.5" r="4.2" fill="#d9b07a" stroke="#5a4a1a" stroke-width="1.8"/>
<path d="M836 459 L904 424 L903 415 L920 405.5 L941 393.5 L945.5 401 L947.5 410 L910 428 L908.5 431 L844 464 L838.5 463Z" fill="#f6d45c" stroke="#161616" stroke-width="1.5" stroke-linejoin="round" stroke-linecap="round" />
<path d="M910 428 L944 413.8 L945.8 419 L912.8 435Z" fill="#f4e26c" stroke="#161616" stroke-width="1.3" stroke-linejoin="round" stroke-linecap="round" />
<path d="M915 426.2 L917.5 432.4" fill="none" stroke="#161616" stroke-width="1.2" stroke-linejoin="round" stroke-linecap="round" />
<path d="M919.5 424.3 L922 430.5" fill="none" stroke="#161616" stroke-width="1.2" stroke-linejoin="round" stroke-linecap="round" />
<path d="M924 422.4 L926.5 428.6" fill="none" stroke="#161616" stroke-width="1.2" stroke-linejoin="round" stroke-linecap="round" />
<path d="M928.5 420.5 L931 426.7" fill="none" stroke="#161616" stroke-width="1.2" stroke-linejoin="round" stroke-linecap="round" />
<path d="M933 418.6 L935.5 424.8" fill="none" stroke="#161616" stroke-width="1.2" stroke-linejoin="round" stroke-linecap="round" />
<path d="M937.5 416.7 L940 422.9" fill="none" stroke="#161616" stroke-width="1.2" stroke-linejoin="round" stroke-linecap="round" />
<path d="M942 414.8 L944.5 421" fill="none" stroke="#161616" stroke-width="1.2" stroke-linejoin="round" stroke-linecap="round" />
<path d="M941 393.5 L952 391.5 L956 398 L957.2 404 L948 410 L945.5 401Z" fill="#f0a23e" stroke="#161616" stroke-width="1.3" stroke-linejoin="round" stroke-linecap="round" />
<path d="M946.5 392.8 L952 408" fill="none" stroke="#161616" stroke-width="1.1" stroke-linejoin="round" stroke-linecap="round" />
<path d="M956 393.5 L965 389 L969 393.5 L968.2 399 L960 402.2Z" fill="#f06a30" stroke="#c0501f" stroke-width="1" stroke-linejoin="round" stroke-linecap="round" />
<ellipse cx="916.5" cy="415.0" rx="4.5" ry="3.5" fill="#8a8fa0" stroke="#333" stroke-width="1"/>
<path d="M902 411C903 410.4 906 408.2 908 407.5C910 406.8 912.6 406.4 914 407C915.4 407.6 916.1 410.3 916.5 411" fill="none" stroke="#9aa" stroke-width="2.2" stroke-linejoin="round" stroke-linecap="round" />
<path d="M825 439C825.5 436.2 824.7 436.2 830 433C835.3 429.8 848 424 857 420C866 416 877.5 411 884 409C890.5 407 893.2 407 896 408C898.8 409 899.8 412.7 901 415C902.2 417.3 903.2 419.7 903 422C902.8 424.3 905.5 425.3 900 429C894.5 432.7 879.7 439.2 870 444C860.3 448.8 848.3 456 842 458C835.7 460 834.5 457.3 832 456C829.5 454.7 828.2 452.8 827 450C825.8 447.2 824.5 441.8 825 439Z" fill="#a6ecb2" stroke="#173f28" stroke-width="1.8" stroke-linejoin="round" stroke-linecap="round" />
<path d="M842 427.5C842.7 429.4 844 435.3 846 439C848 442.7 852.7 447.8 854 449.5" fill="none" stroke="#14452a" stroke-width="6.5" stroke-linejoin="round" stroke-linecap="round" />
<path d="M842 427.5C842.7 429.4 844 435.3 846 439C848 442.7 852.7 447.8 854 449.5" fill="none" stroke="#4fb184" stroke-width="3.2" stroke-linejoin="round" stroke-linecap="round" />
<path d="M866 415C866.8 417 868.3 423.2 870.5 427C872.7 430.8 877.6 436.2 879 438" fill="none" stroke="#14452a" stroke-width="6.5" stroke-linejoin="round" stroke-linecap="round" />
<path d="M866 415C866.8 417 868.3 423.2 870.5 427C872.7 430.8 877.6 436.2 879 438" fill="none" stroke="#4fb184" stroke-width="3.2" stroke-linejoin="round" stroke-linecap="round" />
<path d="M894 408.5C894.9 409.6 898.2 412.8 899.5 415C900.8 417.2 901.6 419.7 901.5 422C901.4 424.3 899.4 427.8 899 429" fill="none" stroke="#2c8a5a" stroke-width="3" stroke-linejoin="round" stroke-linecap="round" />
<path d="M1132 367.6C1128.7 367.8 1119 367.6 1112 369C1105 370.4 1097 372.2 1090 376C1083 379.8 1076 386 1070 392C1064 398 1058.7 404 1054 412C1049.3 420 1044.8 430.3 1042 440C1039.2 449.7 1038 460 1037 470C1036 480 1036 490 1036 500C1036 510 1036.2 520.3 1037 530C1037.8 539.7 1039.5 553 1041 558C1042.5 563 1043.2 555.3 1046 560C1048.8 564.7 1054.3 578.7 1058 586C1061.7 593.3 1065 599.4 1068 604C1071 608.6 1074.7 612 1076 613.6L1076 613.6C1076.7 611.7 1077 605 1080 602.4C1083 599.8 1089 599.3 1094 598C1099 596.7 1107.3 595 1110 594.4L1110 594.4 L1186 588.4L1186 588.4C1187 589 1188 591.7 1192 592C1196 592.3 1204.3 589.7 1210 590C1215.7 590.3 1220.4 593.6 1226 594C1231.6 594.4 1240.5 592.7 1243.4 592.4L1243.4 592.4C1242.5 588 1238.7 574.7 1238 566C1237.3 557.3 1238.7 542.7 1239 540C1239.3 537.3 1239.5 553.3 1240 550C1240.5 546.7 1242 530 1242 520C1242 510 1241 499.3 1240 490C1239 480.7 1238 472.3 1236 464C1234 455.7 1231.7 448 1228 440C1224.3 432 1219.3 423.3 1214 416C1208.7 408.7 1202.3 402 1196 396C1189.7 390 1183.3 384.5 1176 380C1168.7 375.5 1159.3 371.1 1152 369C1144.7 366.9 1135.3 367.8 1132 367.6Z" fill="#231f20" stroke="#111" stroke-width="1.2" stroke-linejoin="round" stroke-linecap="round" />
<path d="M1088 622.4C1083.3 623 1067 623.7 1060 626C1053 628.3 1050.3 631 1046 636C1041.7 641 1038 648.7 1034 656C1030 663.3 1025.7 672 1022 680C1018.3 688 1015.7 696.3 1012 704C1008.3 711.7 1002.3 720.7 1000 726C997.7 731.3 1000 731 998 736C996 741 993 747.7 988 756C983 764.3 974.7 776 968 786C961.3 796 954.9 805.7 948 816C941.1 826.3 930 842.3 926.4 847.6L926.4 847.6C923.7 848.3 917.9 849.8 910 852C902.1 854.2 884.8 859 879 861C873.2 863 875.6 862.8 875.2 864C874.8 865.2 871.9 866.6 876.4 868C880.9 869.4 897.7 871.7 902 872.4L902 872.4C900 875.7 893.7 886.1 890 892C886.3 897.9 882.1 904.4 880 908C877.9 911.6 877.6 912.1 877.6 913.6C877.6 915.1 878.7 917.1 880 917.2C881.3 917.3 881.5 918 885.6 914.4C889.7 910.8 901.3 898.7 904.4 895.6L904.4 895.6C903.3 899 899.5 909.8 898 916C896.5 922.2 895.7 929.3 895.6 933C895.5 936.7 896.3 937.1 897.2 938C898.1 938.9 899.7 940.1 901.2 938.4C902.7 936.7 902.9 933.8 906.4 928C909.9 922.2 919.7 907.7 922.4 903.6L922.4 903.6C921.9 907.3 919.9 920.2 919.6 926C919.3 931.8 919.6 935.9 920.4 938.4C921.2 940.9 923.1 941.2 924.4 940.8C925.7 940.4 925.7 941.2 928 936C930.3 930.8 936.7 914 938.4 909.6L938.4 909.6C939 912.7 940.9 923.6 942 928C943.1 932.4 943.6 934.6 944.8 936C946 937.4 948 937.1 949.2 936.4C950.4 935.7 951.2 936.4 952 932C952.8 927.6 952.7 917.3 954 910C955.3 902.7 958.3 895.3 960 888C961.7 880.7 963.3 869.7 964 866L964 866C966.7 863.3 973 857.7 980 850C987 842.3 997.7 830.7 1006 820C1014.3 809.3 1023 796 1030 786C1037 776 1042.7 767.7 1048 760C1053.3 752.3 1057.7 743.3 1062 740C1066.3 736.7 1069.3 745 1074 740C1078.7 735 1086.7 720 1090 710C1093.3 700 1093.3 685 1094 680Z" fill="#fde5c8" stroke="none" stroke-width="0" stroke-linejoin="round" stroke-linecap="round" />
<path d="M1088 622.4C1083.3 623 1067 623.7 1060 626C1053 628.3 1050.3 631 1046 636C1041.7 641 1038 648.7 1034 656C1030 663.3 1025.7 672 1022 680C1018.3 688 1015.7 696.3 1012 704C1008.3 711.7 1002.3 720.7 1000 726C997.7 731.3 1000 731 998 736C996 741 993 747.7 988 756C983 764.3 974.7 776 968 786C961.3 796 954.9 805.7 948 816C941.1 826.3 930 842.3 926.4 847.6L926.4 847.6C923.7 848.3 917.9 849.8 910 852C902.1 854.2 884.8 859 879 861C873.2 863 875.6 862.8 875.2 864C874.8 865.2 871.9 866.6 876.4 868C880.9 869.4 897.7 871.7 902 872.4L902 872.4C900 875.7 893.7 886.1 890 892C886.3 897.9 882.1 904.4 880 908C877.9 911.6 877.6 912.1 877.6 913.6C877.6 915.1 878.7 917.1 880 917.2C881.3 917.3 881.5 918 885.6 914.4C889.7 910.8 901.3 898.7 904.4 895.6L904.4 895.6C903.3 899 899.5 909.8 898 916C896.5 922.2 895.7 929.3 895.6 933C895.5 936.7 896.3 937.1 897.2 938C898.1 938.9 899.7 940.1 901.2 938.4C902.7 936.7 902.9 933.8 906.4 928C909.9 922.2 919.7 907.7 922.4 903.6L922.4 903.6C921.9 907.3 919.9 920.2 919.6 926C919.3 931.8 919.6 935.9 920.4 938.4C921.2 940.9 923.1 941.2 924.4 940.8C925.7 940.4 925.7 941.2 928 936C930.3 930.8 936.7 914 938.4 909.6L938.4 909.6C939 912.7 940.9 923.6 942 928C943.1 932.4 943.6 934.6 944.8 936C946 937.4 948 937.1 949.2 936.4C950.4 935.7 951.2 936.4 952 932C952.8 927.6 952.7 917.3 954 910C955.3 902.7 958.3 895.3 960 888C961.7 880.7 963.3 869.7 964 866L964 866C966.7 863.3 973 857.7 980 850C987 842.3 997.7 830.7 1006 820C1014.3 809.3 1023 796 1030 786C1037 776 1042.7 767.7 1048 760C1053.3 752.3 1059.7 743.3 1062 740" fill="none" stroke="#161616" stroke-width="2.1" stroke-linejoin="round" stroke-linecap="round" />
<path d="M993 761.6C994.5 761.2 998.8 758.8 1002 759C1005.2 759.2 1009 761.2 1012 763C1015 764.8 1017.8 767.4 1020 770C1022.2 772.6 1024.2 777 1025 778.4" fill="none" stroke="#555" stroke-width="1.2" stroke-linejoin="round" stroke-linecap="round" stroke-dasharray="7 3"/>
<path d="M1031 784 L1033 788.4" fill="none" stroke="#161616" stroke-width="1.2" stroke-linejoin="round" stroke-linecap="round" />
<path d="M963.6 866 L964 874" fill="none" stroke="#161616" stroke-width="1.2" stroke-linejoin="round" stroke-linecap="round" />
<path d="M1233 609C1235.8 609.2 1244.5 608.5 1250 610C1255.5 611.5 1260.3 614 1266 618C1271.7 622 1277.7 628.3 1284 634C1290.3 639.7 1297.3 646.3 1304 652C1310.7 657.7 1316.3 662.3 1324 668C1331.7 673.7 1340 680.7 1350 686C1360 691.3 1376.3 696.7 1384 700C1391.7 703.3 1394 705 1396 706L1336 736C1334.7 735.8 1332.3 736.6 1328 735C1323.7 733.4 1318 729.8 1310 726.4C1302 723 1287.7 721.5 1280 714.4C1272.3 707.3 1266.7 689.1 1264 684L1250.0 678.0Z" fill="#fde5c8" stroke="none" stroke-width="0" stroke-linejoin="round" stroke-linecap="round" />
<path d="M1233 609C1235.8 609.2 1244.5 608.5 1250 610C1255.5 611.5 1260.3 614 1266 618C1271.7 622 1277.7 628.3 1284 634C1290.3 639.7 1297.3 646.3 1304 652C1310.7 657.7 1316.3 662.3 1324 668C1331.7 673.7 1340 680.7 1350 686C1360 691.3 1376.3 696.7 1384 700C1391.7 703.3 1394 705 1396 706" fill="none" stroke="#161616" stroke-width="2.1" stroke-linejoin="round" stroke-linecap="round" />
<path d="M1336 736C1334.7 735.8 1332.3 736.6 1328 735C1323.7 733.4 1318 729.8 1310 726.4C1302 723 1287.7 721.5 1280 714.4C1272.3 707.3 1266.7 689.1 1264 684" fill="none" stroke="#161616" stroke-width="2.1" stroke-linejoin="round" stroke-linecap="round" />
<path d="M1111.2 590 L1111.2 614 L1105 622.4 L1088 622.4 L1084 660 L1096 692 L1136 720 L1180 720 L1220 704 L1236 672 L1234 609 L1192 608 L1188 607.6 L1186 590Z" fill="#fde5c8" stroke="none" stroke-width="0" stroke-linejoin="round" stroke-linecap="round" />
<path d="M1111.2 595C1111.2 598.2 1112.2 608.5 1111.2 614C1110.2 619.5 1106 625.7 1105 628" fill="none" stroke="#161616" stroke-width="2.1" stroke-linejoin="round" stroke-linecap="round" />
<path d="M1186 592.4C1186.3 594.9 1186.5 603 1188 607.6C1189.5 612.2 1193.8 617.9 1195 620" fill="none" stroke="#161616" stroke-width="2.1" stroke-linejoin="round" stroke-linecap="round" />
<path d="M1109 617.6 L1088 622.4" fill="none" stroke="#161616" stroke-width="2.1" stroke-linejoin="round" stroke-linecap="round" />
<path d="M1191 608 L1220 609" fill="none" stroke="#161616" stroke-width="2.1" stroke-linejoin="round" stroke-linecap="round" />
<path d="M1122 600C1122.5 601.7 1123.8 606.9 1125 610C1126.2 613.1 1128.3 617 1129 618.4" fill="none" stroke="#555" stroke-width="1" stroke-linejoin="round" stroke-linecap="round" />
<path d="M1174.4 597C1174.2 598.8 1173.7 604.5 1173 608C1172.3 611.5 1170.8 616.3 1170.4 618" fill="none" stroke="#555" stroke-width="1" stroke-linejoin="round" stroke-linecap="round" />
<path d="M1100 665.6C1102.3 666.2 1109.3 668.6 1114 669C1118.7 669.4 1124.3 667.5 1128 668C1131.7 668.5 1133.8 670.7 1136 672C1138.2 673.3 1140.2 675 1141 675.6" fill="none" stroke="#333" stroke-width="1.4" stroke-linejoin="round" stroke-linecap="round" />
<path d="M1179 671C1180.2 669.5 1182.5 664.4 1186 662C1189.5 659.6 1195.7 658.3 1200 656.4C1204.3 654.5 1209.5 651.8 1212 650.4C1214.5 649 1214.5 648.4 1215 648" fill="none" stroke="#333" stroke-width="1.4" stroke-linejoin="round" stroke-linecap="round" />
<path d="M1074 624.4C1075 629 1078 642.7 1080 652C1082 661.3 1085.3 672 1086 680C1086.7 688 1086.7 691.7 1084 700C1081.3 708.3 1073.3 721.7 1070 730C1066.7 738.3 1065.7 747 1064.4 750C1063.1 753 1061.7 743.7 1062 748C1062.3 752.3 1064.2 768 1066 776C1067.8 784 1071.8 792.7 1073 796L1073 796C1072.3 800 1067.8 815.3 1069 820C1070.2 824.7 1078 821.9 1080 824C1082 826.1 1079.9 830.7 1081 832.4C1082.1 834.1 1085.5 834.1 1086.4 834.4L1086.4 834.4C1086.5 838 1087.3 847.4 1087.2 856C1087.1 864.6 1087.2 876 1086 886C1084.8 896 1082.7 905.7 1080 916C1077.3 926.3 1071.7 942.7 1070 948L1070 948 L1284 948L1284 948C1282.7 942.7 1278.7 926.3 1276 916C1273.3 905.7 1269.5 896 1268 886C1266.5 876 1267 866 1267 856C1267 846 1267.8 831 1268 826L1266 826C1266.5 824.3 1266.3 822.3 1269 816C1271.7 809.7 1279.8 793 1282 788.4L1282 788.4C1281.7 786.3 1279.7 781.4 1280 776C1280.3 770.6 1283.5 762.7 1284 756C1284.5 749.3 1283.3 740.3 1283 736C1282.7 731.7 1283.2 734.3 1282 730C1280.8 725.7 1278.7 715.7 1276 710C1273.3 704.3 1270.3 701.3 1266 696C1261.7 690.7 1253.8 685.3 1250 678C1246.2 670.7 1245.8 663.5 1243 652C1240.2 640.5 1234.7 616.2 1233 609L1233 609 L1218 610L1218 610 L1232 672.4L1232 672.4C1229.7 676.7 1223.3 692.7 1218 698C1212.7 703.3 1208 702.1 1200 704.4C1192 706.7 1180.7 710.4 1170 712C1159.3 713.6 1144.7 714.9 1136 714C1127.3 713.1 1124 711.3 1118 706.4C1112 701.5 1103 688.1 1100 684.4L1100 684.4 L1088 623L1088 623 L1074 624.4Z" fill="#ea566d" stroke="#161616" stroke-width="2.1" stroke-linejoin="round" stroke-linecap="round" />
<path d="M1086 674C1088.3 677.2 1094.3 687 1100 693C1105.7 699 1113.3 705.5 1120 710C1126.7 714.5 1132.3 715.8 1140 720C1147.7 724.2 1161.7 732.5 1166 735" fill="none" stroke="#161616" stroke-width="2.1" stroke-linejoin="round" stroke-linecap="round" />
<path d="M1072 713C1071.5 714.8 1070.2 720.3 1069 724C1067.8 727.7 1065.7 733.2 1065 735" fill="none" stroke="#161616" stroke-width="2.1" stroke-linejoin="round" stroke-linecap="round" />
<path d="M1086 695C1090.3 698.5 1103 709.7 1112 716C1121 722.3 1132.3 728.3 1140 733C1147.7 737.7 1155 742.2 1158 744" fill="none" stroke="#161616" stroke-width="2.1" stroke-linejoin="round" stroke-linecap="round" />
<path d="M1232 673C1229.7 677.2 1223.3 690.8 1218 698C1212.7 705.2 1205.3 710.3 1200 716C1194.7 721.7 1188.3 729.3 1186 732" fill="none" stroke="#161616" stroke-width="2.1" stroke-linejoin="round" stroke-linecap="round" />
<path d="M1250 680C1246.7 685 1236.7 701.7 1230 710C1223.3 718.3 1215.7 724.7 1210 730C1204.3 735.3 1198.3 740 1196 742" fill="none" stroke="#161616" stroke-width="2.1" stroke-linejoin="round" stroke-linecap="round" />
<path d="M1243 652 L1232 678" fill="none" stroke="#161616" stroke-width="2.1" stroke-linejoin="round" stroke-linecap="round" />
<path d="M1073 796C1080.8 797.3 1103.8 802.2 1120 804C1136.2 805.8 1153.3 807.7 1170 807C1186.7 806.3 1205 803.5 1220 800C1235 796.5 1250 790.2 1260 786C1270 781.8 1276.7 776.8 1280 775" fill="none" stroke="#161616" stroke-width="2.1" stroke-linejoin="round" stroke-linecap="round" />
<path d="M1079.8 813.4C1079.9 815.9 1080.2 825.2 1080.6 828.4C1081 831.6 1081.1 831.4 1082.2 832.4C1083.3 833.4 1085.4 834.1 1087 834.5C1088.6 834.9 1090.8 835.5 1091.8 834.9C1092.8 834.3 1092.9 834 1093 830.9C1093.1 827.8 1092.3 818.9 1092.2 816.5" fill="none" stroke="#161616" stroke-width="1.7" stroke-linejoin="round" stroke-linecap="round" />
<path d="M1098.8 817.4C1098.9 819.9 1099.2 829.2 1099.6 832.4C1100 835.6 1099.9 835.5 1101.2 836.4C1102.5 837.3 1105.4 837.7 1107.5 837.9C1109.6 838.1 1112.5 838.5 1113.8 837.8C1115 837.1 1114.9 836.9 1115 833.8C1115.1 830.7 1114.3 821.8 1114.2 819.4" fill="none" stroke="#161616" stroke-width="1.7" stroke-linejoin="round" stroke-linecap="round" />
<path d="M1120.8 819.4C1120.9 821.9 1121.2 831.2 1121.6 834.4C1122 837.6 1122 837.5 1123.2 838.4C1124.4 839.3 1127.1 839.5 1129 839.7C1130.9 839.9 1133.6 840.1 1134.8 839.4C1136 838.7 1135.9 838.5 1136 835.4C1136.1 832.3 1135.3 823.4 1135.2 821" fill="none" stroke="#161616" stroke-width="1.7" stroke-linejoin="round" stroke-linecap="round" />
<path d="M1143.8 821C1143.9 823.5 1144.2 832.8 1144.6 836C1145 839.2 1144.5 839.1 1146.2 840C1147.9 840.9 1151.7 841.1 1154.5 841.3C1157.3 841.5 1161.2 841.7 1162.8 841C1164.4 840.3 1163.9 840.1 1164 837C1164.1 833.9 1163.3 825 1163.2 822.6" fill="none" stroke="#161616" stroke-width="1.7" stroke-linejoin="round" stroke-linecap="round" />
<path d="M1172.8 821.6C1172.9 824.1 1173.2 833.4 1173.6 836.6C1174 839.8 1173.8 839.9 1175.2 840.6C1176.6 841.4 1179.7 841.2 1182 841.1C1184.3 841 1187.5 840.9 1188.8 840C1190.1 839.1 1189.9 839.1 1190 836C1190.1 832.9 1189.3 824 1189.2 821.6" fill="none" stroke="#161616" stroke-width="1.7" stroke-linejoin="round" stroke-linecap="round" />
<path d="M1199.8 817.4C1199.9 819.9 1200.2 829.2 1200.6 832.4C1201 835.6 1200.8 835.8 1202.2 836.4C1203.6 837 1206.7 836.2 1209 835.7C1211.3 835.2 1214.5 834.5 1215.8 833.4C1217.1 832.3 1216.9 832.5 1217 829.4C1217.1 826.3 1216.3 817.4 1216.2 815" fill="none" stroke="#161616" stroke-width="1.7" stroke-linejoin="round" stroke-linecap="round" />
<path d="M1223.8 811.4C1223.9 813.9 1224.2 823.2 1224.6 826.4C1225 829.6 1225 830 1226.2 830.4C1227.4 830.8 1229.7 829.5 1231.5 828.7C1233.3 827.9 1235.7 826.6 1236.8 825.4C1237.9 824.2 1237.9 824.5 1238 821.4C1238.1 818.3 1237.3 809.4 1237.2 807" fill="none" stroke="#161616" stroke-width="1.7" stroke-linejoin="round" stroke-linecap="round" />
<path d="M1246.8 802.9C1246.9 805.4 1247.2 814.7 1247.6 817.9C1248 821.1 1248.3 821.4 1249.2 821.9C1250.1 822.4 1251.7 821.6 1253 821C1254.3 820.4 1256 819.5 1256.8 818.4C1257.6 817.3 1257.9 817.5 1258 814.4C1258.1 811.3 1257.3 802.4 1257.2 800" fill="none" stroke="#161616" stroke-width="1.7" stroke-linejoin="round" stroke-linecap="round" />
<path d="M1265.8 796.8C1265.9 799.3 1266.2 808.6 1266.6 811.8C1267 815 1267.1 815.3 1268.2 815.8C1269.3 816.3 1271.4 815.4 1273 814.8C1274.6 814.2 1276.8 813.4 1277.8 812.3C1278.8 811.2 1278.9 811.4 1279 808.3C1279.1 805.2 1278.3 796.3 1278.2 793.9" fill="none" stroke="#161616" stroke-width="1.7" stroke-linejoin="round" stroke-linecap="round" />
<path d="M1069 820C1070.8 820.7 1078 821.9 1080 824C1082 826.1 1080.8 831 1081 832.4" fill="none" stroke="#161616" stroke-width="1.7" stroke-linejoin="round" stroke-linecap="round" />
<path d="M1166 738 L1138 754 L1156 778.4 L1169 745Z" fill="#ea566d" stroke="#161616" stroke-width="2.1" stroke-linejoin="round" stroke-linecap="round" />
<path d="M1186 738 L1217 748.4 L1208 773.2 L1187 745Z" fill="#ea566d" stroke="#161616" stroke-width="2.1" stroke-linejoin="round" stroke-linecap="round" />
<ellipse cx="1177.0" cy="743.0" rx="9.5" ry="9" fill="#ea566d" stroke="#161616" stroke-width="2.1"/>
<path d="M1102 902 L1094 946" fill="none" stroke="#3a1218" stroke-width="1.3" stroke-linejoin="round" stroke-linecap="round" />
<path d="M1126 910 L1122 946" fill="none" stroke="#3a1218" stroke-width="1.3" stroke-linejoin="round" stroke-linecap="round" />
<path d="M1152 914 L1150 946" fill="none" stroke="#3a1218" stroke-width="1.3" stroke-linejoin="round" stroke-linecap="round" />
<path d="M1177 906 L1178 946" fill="none" stroke="#3a1218" stroke-width="1.3" stroke-linejoin="round" stroke-linecap="round" />
<path d="M1204 914 L1208 946" fill="none" stroke="#3a1218" stroke-width="1.3" stroke-linejoin="round" stroke-linecap="round" />
<path d="M1229 906 L1238 946" fill="none" stroke="#3a1218" stroke-width="1.3" stroke-linejoin="round" stroke-linecap="round" />
<path d="M1257 910 L1264 923" fill="none" stroke="#3a1218" stroke-width="1.3" stroke-linejoin="round" stroke-linecap="round" />
<path d="M1064.4 484.4C1065.2 485.3 1065.7 488.3 1069 490C1072.3 491.7 1079.5 494 1084 494.4C1088.5 494.8 1090.7 493.4 1096 492.4C1101.3 491.4 1108.7 488.7 1116 488.4C1123.3 488.1 1133 490.7 1140 490.4C1147 490.1 1154.3 487.7 1158 486.4C1161.7 485.1 1157.7 483.7 1162.4 482.4C1167.1 481.1 1179.7 479.5 1186 478.4C1192.3 477.3 1196.3 477.5 1200 476C1203.7 474.5 1207 470.7 1208.4 469.6L1208.4 469.6C1209.5 473 1213.7 485.4 1215 490C1216.3 494.6 1216.2 495.8 1216.4 497L1216.4 497C1217.2 496.9 1219.9 494.6 1221.2 496.4C1222.5 498.2 1224.3 503.7 1224.4 508C1224.5 512.3 1223.4 518.6 1221.6 522C1219.8 525.4 1214.9 527.3 1213.6 528.4L1213.6 528.4C1213.4 530.3 1213.5 536.4 1212.4 540C1211.3 543.6 1208.7 546.2 1207 550C1205.3 553.8 1204.6 558.3 1202.4 563C1200.2 567.7 1196.7 574 1194 578C1191.3 582 1190 583.9 1186 587C1182 590.1 1176.3 593.8 1170 596.4C1163.7 599 1156.3 602.7 1148 602.4C1139.7 602.1 1128 597.7 1120 594.4C1112 591.1 1106 588.1 1100 582.4C1094 576.7 1088 567.1 1084 560C1080 552.9 1078 542 1076 540C1074 538 1072.9 547.6 1072 548C1071.1 548.4 1070.7 543.3 1070.4 542.4L1070.4 542.4C1069.6 542.2 1067.5 543.1 1065.6 541C1063.7 538.9 1060.3 534 1059 530C1057.7 526 1057.4 520.2 1058 517C1058.6 513.8 1061.7 512 1062.4 511L1062.4 511 L1064.4 484.4Z" fill="#fde5c8" stroke="none" stroke-width="0" stroke-linejoin="round" stroke-linecap="round" />
<path d="M1216.4 497C1217.2 496.9 1219.9 494.6 1221.2 496.4C1222.5 498.2 1224.3 503.7 1224.4 508C1224.5 512.3 1223.4 518.6 1221.6 522C1219.8 525.4 1214.9 527.3 1213.6 528.4L1213.6 528.4C1213.4 530.3 1213.5 536.4 1212.4 540C1211.3 543.6 1208.7 546.2 1207 550C1205.3 553.8 1204.6 558.3 1202.4 563C1200.2 567.7 1196.7 574 1194 578C1191.3 582 1190 583.9 1186 587C1182 590.1 1176.3 593.8 1170 596.4C1163.7 599 1156.3 602.7 1148 602.4C1139.7 602.1 1128 597.7 1120 594.4C1112 591.1 1106 588.1 1100 582.4C1094 576.7 1088 567.1 1084 560C1080 552.9 1078 542 1076 540C1074 538 1072.9 547.6 1072 548C1071.1 548.4 1070.7 543.3 1070.4 542.4L1070.4 542.4C1069.6 542.2 1067.5 543.1 1065.6 541C1063.7 538.9 1060.3 534 1059 530C1057.7 526 1057.4 520.2 1058 517C1058.6 513.8 1061.7 512 1062.4 511" fill="none" stroke="#161616" stroke-width="2.1" stroke-linejoin="round" stroke-linecap="round" />
<path d="M1217 508C1216.8 509.7 1216.8 515.3 1216 518C1215.2 520.7 1212.7 523 1212 524" fill="none" stroke="#161616" stroke-width="1.2" stroke-linejoin="round" stroke-linecap="round" />
<path d="M1065 520C1065.3 521.7 1066.2 527.3 1067 530C1067.8 532.7 1069.5 535 1070 536" fill="none" stroke="#161616" stroke-width="1.2" stroke-linejoin="round" stroke-linecap="round" />
<path d="M1091 475 L1096.4 492.4 L1098.4 491.8Z" fill="#fde5c8" stroke="none" stroke-width="0" stroke-linejoin="round" stroke-linecap="round" />
<path d="M1112 470 L1117.2 488.6 L1119.6 488.2Z" fill="#fde5c8" stroke="none" stroke-width="0" stroke-linejoin="round" stroke-linecap="round" />
<path d="M1159.6 448 L1161.2 483.6 L1163.2 482.8Z" fill="#fde5c8" stroke="none" stroke-width="0" stroke-linejoin="round" stroke-linecap="round" />
<path d="M1186 458 L1185.4 478.8 L1187.2 478.4Z" fill="#fde5c8" stroke="none" stroke-width="0" stroke-linejoin="round" stroke-linecap="round" />
<ellipse cx="1106" cy="528.5" rx="19.5" ry="13.4" fill="#fff"/>
<ellipse cx="1109" cy="527" rx="13.4" ry="12.8" fill="#141416"/>
<path d="M1106 535.5C1107.2 535.5 1111 536.3 1113 535.5C1115 534.7 1117.2 531.3 1118 530.5" fill="none" stroke="#777" stroke-width="1.5" stroke-linejoin="round" stroke-linecap="round" />
<circle cx="1102.7" cy="522.5" r="3.7" fill="#fff"/>
<ellipse cx="1179.8" cy="520.5" rx="19" ry="13.4" fill="#fff"/>
<ellipse cx="1179" cy="518.5" rx="14" ry="12.8" fill="#141416"/>
<path d="M1176 527C1177.2 527 1181 527.8 1183 527C1185 526.2 1187.2 522.8 1188 522" fill="none" stroke="#777" stroke-width="1.5" stroke-linejoin="round" stroke-linecap="round" />
<circle cx="1173.5" cy="516" r="3.7" fill="#fff"/>
<path d="M1086.4 528C1087.3 526.7 1089.7 522.3 1092 520C1094.3 517.7 1097.2 515.5 1100 514.4C1102.8 513.3 1106 513 1109 513.4C1112 513.8 1115.3 515.1 1118 517C1120.7 518.9 1123.8 523.7 1125 525" fill="none" stroke="#111" stroke-width="2.8" stroke-linejoin="round" stroke-linecap="round" />
<path d="M1160 520C1160.8 518.7 1162.8 514.3 1165 512C1167.2 509.7 1170.3 507.7 1173 506.4C1175.7 505.1 1178.2 504.1 1181 504.4C1183.8 504.7 1187 505.6 1190 508C1193 510.4 1197.5 517.2 1199 519" fill="none" stroke="#111" stroke-width="2.8" stroke-linejoin="round" stroke-linecap="round" />
<path d="M1088 504C1090.7 503.2 1099.3 499.3 1104 499C1108.7 498.7 1112.9 500.8 1116 502C1119.1 503.2 1121.3 505.7 1122.4 506.4" fill="none" stroke="#111" stroke-width="1.7" stroke-linejoin="round" stroke-linecap="round" />
<path d="M1157.6 502.4C1158.7 501.3 1161.3 497.8 1164 496C1166.7 494.2 1170 492.7 1174 491.6C1178 490.5 1185.7 489.9 1188 489.6" fill="none" stroke="#111" stroke-width="1.7" stroke-linejoin="round" stroke-linecap="round" />
<path d="M1140 554.4C1140.5 554.7 1142 555.9 1143 556C1144 556.1 1145.5 555.3 1146 555.2" fill="none" stroke="#5a4030" stroke-width="1.2" stroke-linejoin="round" stroke-linecap="round" />
<path d="M1151.6 553.6 L1153.6 555.6" fill="none" stroke="#5a4030" stroke-width="1.2" stroke-linejoin="round" stroke-linecap="round" />
<path d="M1128 572C1129.7 572.8 1134 576.1 1138 577C1142 577.9 1147.7 578.1 1152 577.6C1156.3 577.1 1160.6 575.6 1164 574C1167.4 572.4 1171 569 1172.4 568" fill="none" stroke="#111" stroke-width="1.8" stroke-linejoin="round" stroke-linecap="round" />
<defs><clipPath id="cpBall"><circle cx="1434" cy="875" r="173.5"/></clipPath>
<radialGradient id="gBall" gradientUnits="userSpaceOnUse" cx="1500" cy="823" r="250"><stop offset="0" stop-color="#000" stop-opacity="0.08"/><stop offset="0.3" stop-color="#444" stop-opacity="0.02"/><stop offset="0.45" stop-color="#fff" stop-opacity="0.03"/><stop offset="1" stop-color="#fff" stop-opacity="0.26"/></radialGradient></defs>
<g clip-path="url(#cpBall)"><path d="M1500 823L1504 799C1503.3 793.5 1502.7 775.8 1500 766C1497.3 756.2 1492.7 748 1488 740C1483.3 732 1477.3 723.7 1472 718C1466.7 712.3 1460 709.7 1456 706C1452 702.3 1449.3 697.7 1448 696L1344.0 442.0L1075.7359312880715 398.73593128807147L984.0 532.0L1328 726C1331 726.5 1338 727.7 1346 729C1354 730.3 1364.3 731.2 1376 734C1387.7 736.8 1402.7 740 1416 746C1429.3 752 1444.7 760.7 1456 770C1467.3 779.3 1479.3 796.7 1484 802Z" fill="#88dad4"/><path d="M1500 823L1484 802C1479.3 796.7 1467.3 779.3 1456 770C1444.7 760.7 1429.3 752 1416 746C1402.7 740 1387.7 736.8 1376 734C1364.3 731.2 1354 730.3 1346 729C1338 727.7 1331 726.5 1328 726L984.0 532.0L908.1636457007138 724.3606076167856L756.0 904.0L1252 850C1255 847.3 1261 840.7 1270 834C1279 827.3 1291.7 816.5 1306 810C1320.3 803.5 1339.3 797.8 1356 795C1372.7 792.2 1391 791.8 1406 793C1421 794.2 1434.3 797.8 1446 802C1457.7 806.2 1471 815.3 1476 818Z" fill="#86dc8e"/><path d="M1500 823L1476 818C1471 815.3 1457.7 806.2 1446 802C1434.3 797.8 1421 794.2 1406 793C1391 791.8 1372.7 792.2 1356 795C1339.3 797.8 1320.3 803.5 1306 810C1291.7 816.5 1279 827.3 1270 834C1261 840.7 1255 847.3 1252 850L756.0 904.0L937.883774907198 1032.822185403304L942.0 1228.0L1314 958C1315.3 956 1315 955 1322 946C1329 937 1343.7 917 1356 904C1368.3 891 1382.7 878 1396 868C1409.3 858 1422.7 850.3 1436 844C1449.3 837.7 1469.3 832.3 1476 830Z" fill="#f0e66e"/><path d="M1500 823L1476 830C1469.3 832.3 1449.3 837.7 1436 844C1422.7 850.3 1409.3 858 1396 868C1382.7 878 1368.3 891 1356 904C1343.7 917 1329 937 1322 946C1315 955 1315.3 956 1314 958L942.0 1228.0L1090.6090497839934 1261.6331609457216L1302.0 1228.0L1434 958C1434.3 956 1434 953 1436 946C1438 939 1441.7 927 1446 916C1450.3 905 1456 892 1462 880C1468 868 1478.7 850 1482 844Z" fill="#e0b684"/><path d="M1500 823L1482 844C1478.7 850 1468 868 1462 880C1456 892 1450.3 905 1446 916C1441.7 927 1438 939 1436 946C1434 953 1434.3 956 1434 958L1302.0 1228.0L1488.9724512423857 1422.898652414221L1683.0 1234.0L1561 960C1559.5 957.7 1558.2 955.3 1552 946C1545.8 936.7 1530.7 916.3 1524 904C1517.3 891.7 1514.8 881.5 1512 872C1509.2 862.5 1507.8 851.2 1507 847Z" fill="#e680a6"/><path d="M1500 823L1507 847C1507.8 851.2 1509.2 862.5 1512 872C1514.8 881.5 1517.3 891.7 1524 904C1530.7 916.3 1545.8 936.7 1552 946C1558.2 955.3 1559.5 957.7 1561 960L1683.0 1234.0L1865.955534882571 1298.4750745189608L1728.0 946.0L1576 864C1572.5 863.2 1561.7 861.3 1555 859C1548.3 856.7 1541.8 853.3 1536 850C1530.2 846.7 1522.7 840.8 1520 839Z" fill="#ce6ae0"/><path d="M1500 823L1520 839C1522.7 840.8 1530.2 846.7 1536 850C1541.8 853.3 1548.3 856.7 1555 859C1561.7 861.3 1572.5 863.2 1576 864L1728.0 946.0L2088.0183534742723 703.6919282805825L1686.0 616.0L1562 754C1560.7 756.7 1557.7 763 1554 770C1550.3 777 1545.2 789 1540 796C1534.8 803 1525.8 809.3 1523 812Z" fill="#7866d4"/><path d="M1500 823L1523 812C1525.8 809.3 1534.8 803 1540 796C1545.2 789 1550.3 777 1554 770C1557.7 763 1560.7 756.7 1562 754L1686.0 616.0L1530.5724794231467 223.77940330632714L1344.0 442.0L1448 696C1449.3 697.7 1452 702.3 1456 706C1460 709.7 1466.7 712.3 1472 718C1477.3 723.7 1483.3 732 1488 740C1492.7 748 1497.3 756.2 1500 766C1502.7 775.8 1503.3 793.5 1504 799Z" fill="#8cbee6"/><circle cx="1434" cy="875" r="173.5" fill="url(#gBall)"/><path d="M1504 799C1503.3 793.5 1502.7 775.8 1500 766C1497.3 756.2 1492.7 748 1488 740C1483.3 732 1477.3 723.7 1472 718C1466.7 712.3 1460 709.7 1456 706C1452 702.3 1449.3 697.7 1448 696" fill="none" stroke="#111" stroke-width="2" stroke-linejoin="round" stroke-linecap="round" /><path d="M1484 802C1479.3 796.7 1467.3 779.3 1456 770C1444.7 760.7 1429.3 752 1416 746C1402.7 740 1387.7 736.8 1376 734C1364.3 731.2 1354 730.3 1346 729C1338 727.7 1331 726.5 1328 726" fill="none" stroke="#111" stroke-width="2" stroke-linejoin="round" stroke-linecap="round" /><path d="M1476 818C1471 815.3 1457.7 806.2 1446 802C1434.3 797.8 1421 794.2 1406 793C1391 791.8 1372.7 792.2 1356 795C1339.3 797.8 1320.3 803.5 1306 810C1291.7 816.5 1279 827.3 1270 834C1261 840.7 1255 847.3 1252 850" fill="none" stroke="#111" stroke-width="2" stroke-linejoin="round" stroke-linecap="round" /><path d="M1476 830C1469.3 832.3 1449.3 837.7 1436 844C1422.7 850.3 1409.3 858 1396 868C1382.7 878 1368.3 891 1356 904C1343.7 917 1329 937 1322 946C1315 955 1315.3 956 1314 958" fill="none" stroke="#111" stroke-width="2" stroke-linejoin="round" stroke-linecap="round" /><path d="M1482 844C1478.7 850 1468 868 1462 880C1456 892 1450.3 905 1446 916C1441.7 927 1438 939 1436 946C1434 953 1434.3 956 1434 958" fill="none" stroke="#111" stroke-width="2" stroke-linejoin="round" stroke-linecap="round" /><path d="M1507 847C1507.8 851.2 1509.2 862.5 1512 872C1514.8 881.5 1517.3 891.7 1524 904C1530.7 916.3 1545.8 936.7 1552 946C1558.2 955.3 1559.5 957.7 1561 960" fill="none" stroke="#111" stroke-width="2" stroke-linejoin="round" stroke-linecap="round" /><path d="M1520 839C1522.7 840.8 1530.2 846.7 1536 850C1541.8 853.3 1548.3 856.7 1555 859C1561.7 861.3 1572.5 863.2 1576 864" fill="none" stroke="#111" stroke-width="2" stroke-linejoin="round" stroke-linecap="round" /><path d="M1523 812C1525.8 809.3 1534.8 803 1540 796C1545.2 789 1550.3 777 1554 770C1557.7 763 1560.7 756.7 1562 754" fill="none" stroke="#111" stroke-width="2" stroke-linejoin="round" stroke-linecap="round" /></g>
<circle cx="1434" cy="875" r="173.5" fill="none" stroke="#111" stroke-width="2.4"/>
<circle cx="1500" cy="823" r="24" fill="#ece4d1" stroke="#111" stroke-width="2.2"/>
<circle cx="957" cy="603" r="24" fill="none" stroke="#333" stroke-width="1"/>
</g>
</svg>
<div id="tb"><div class="sep" style="left:11.0px"></div><div class="sep" style="left:71.0px"></div><div class="sep" style="left:131.0px"></div><div class="sep" style="left:195.0px"></div><div class="sep" style="left:255.0px"></div><div class="sep" style="left:323.0px"></div><div class="sep" style="left:391.0px"></div><div class="sep" style="left:546.0px"></div><div class="sep" style="left:590.0px"></div><div class="sep" style="left:636.0px"></div><div class="sep" style="left:680.0px"></div><div class="mi" style="left:11.5px">文件</div><div class="mi" style="left:71.5px">编辑</div><div class="mi" style="left:134.0px">工具</div><div class="mi" style="left:196.0px">视图</div><div class="mi" style="left:258.0px">帮助</div></div><div id="logo"></div><svg class="abs" style="left:919px;top:0" width="60" height="60" viewBox="919 0 60 60">
<defs><linearGradient id="rb1" x1="0" y1="0" x2="1" y2="1"><stop offset="0" stop-color="#e0403a"/><stop offset=".25" stop-color="#f0b020"/><stop offset=".5" stop-color="#3cb54a"/><stop offset=".75" stop-color="#2a8fd6"/><stop offset="1" stop-color="#a040c0"/></linearGradient>
<linearGradient id="rb2" x1="1" y1="0" x2="0" y2="1"><stop offset="0" stop-color="#f0a020"/><stop offset=".3" stop-color="#e04060"/><stop offset=".55" stop-color="#a040c0"/><stop offset=".8" stop-color="#3090d8"/><stop offset="1" stop-color="#40b060"/></linearGradient></defs>
<text x="938.300" y="29.500" font-size="20.500" font-weight="bold" text-anchor="middle" fill="url(#rb1)" font-family="'Liberation Sans','Noto Sans CJK SC',sans-serif">乐</text>
<text x="965.600" y="29.500" font-size="20.500" font-weight="bold" text-anchor="middle" fill="url(#rb2)" font-family="'Liberation Sans','Noto Sans CJK SC',sans-serif">画</text>
<circle cx="947" cy="36.700" r="3.100" fill="#f7941d"/>
<path d="M930 41.500 C930 49 938 51.800 948.300 51.800 C958.600 51.800 966.700 49 966.700 41.500 C966.700 40.500 960.500 40.300 960 41.500 C958 44.500 954 45.500 948.300 45.500 C942.600 45.500 938.500 44.500 936.700 41.500 C936 40.300 930 40.500 930 41.500Z" fill="#f7941d"/>
</svg><div id="zoomf"><span>100%</span></div><div class="arr" style="left:1080px;top:19px;border-left-width:3px;border-right-width:3px;border-top-width:4px"></div><svg class="abs" style="left:985px;top:0" width="340" height="44" viewBox="985 0 340 44">
<defs><radialGradient id="lens" cx=".4" cy=".35" r=".7"><stop offset="0" stop-color="#ffffff"/><stop offset="1" stop-color="#e2e2e2"/></radialGradient></defs>
<g fill="none" stroke="#555" stroke-width="1.5">
<path d="M1009.300 28L1014.500 33.200" stroke="#444" stroke-width="3.600" stroke-linecap="round"/><path d="M1009.600 28.300L1014.200 32.900" stroke="#aaa" stroke-width="1.200" stroke-linecap="round"/>
<circle cx="1002.800" cy="21.800" r="8.300" fill="url(#lens)"/><path d="M999.300 21.800H1006.500" stroke="#444" stroke-width="2"/>
<path d="M1117.600 28L1122.800 33.200" stroke="#444" stroke-width="3.600" stroke-linecap="round"/><path d="M1117.900 28.300L1122.500 32.900" stroke="#aaa" stroke-width="1.200" stroke-linecap="round"/>
<circle cx="1111.100" cy="21.800" r="8.300" fill="url(#lens)"/><path d="M1107.500 21.800H1114.700M1111.100 18.200V25.400" stroke="#444" stroke-width="2"/>
</g>
<g fill="#777">
<path d="M1148.200 18.200 L1157.600 10.900 L1157.600 14.600 C1166 14.600 1169.800 19 1169.800 24 C1169.800 29.500 1165.500 33.300 1160 33.300 L1156.600 33.300 L1156.600 29.700 L1160 29.700 C1163 29.700 1165 27.500 1165 24.500 C1165 21.500 1162.500 19.800 1157.600 19.800 L1157.600 23.400Z"/>
<path d="M1214.900 17.900 L1205.500 10.900 L1205.500 14.600 C1197.100 14.600 1193.300 19 1193.300 24 C1193.300 29.500 1197.600 33.300 1203.100 33.300 L1207 33.300 L1207 29.700 L1203.100 29.700 C1200.100 29.700 1198.100 27.500 1198.100 24.500 C1198.100 21.500 1200.600 19.800 1205.500 19.800 L1205.500 23.400Z"/>
<rect x="1241" y="24.800" width="16.200" height="3.100"/>
</g>
<path d="M1289.500 17.300L1303.300 30.300M1303.300 17.300L1289.500 30.300" stroke="#777" stroke-width="4" fill="none"/>
</svg><div class="tab" style="left:128px;top:355px;width:22px;height:50px;border-radius:0 8px 8px 0"></div><div class="panel" style="left:7px;top:336px;width:127px;height:348px"></div><svg class="abs" style="left:114.2px;top:359.2px" width="40" height="40" viewBox="-20 -20 40 40"><g transform="scale(1,1)"><path d="M0 -16.4 A10.8 16.4 0 0 1 0 16.4 L0 8.2 A5.1 8.2 0 0 0 0 -8.2Z" fill="#f8961c"/><circle cx="-4.200" cy="-1.500" r="2.900" fill="#f8961c"/></g></svg><div class="t14" style="left:35px;top:353px">蜡笔属性</div><div class="t12" style="left:36px;top:388px">笔触大小</div><svg class="abs" style="left:0;top:400px" width="140" height="130" viewBox="0 400 140 130"><path d="M15 427.500 L119.500 410.500 L119.500 427.500Z" fill="#f8981d"/><path d="M15 516.500 L91 504.200 L91 516.500Z" fill="#f8981d"/><path d="M91 504.200 L127 498.400 L127 516.500 L91 516.500Z" fill="#808080"/></svg><div class="hnd" style="left:115.500px;top:409px"></div><div class="t10" style="left:100px;top:442px">100%</div><div class="t12" style="left:37px;top:481px">软度</div><div class="hnd" style="left:86px;top:498px"></div><div class="t10" style="left:98px;top:534px">70%</div><div class="btn" style="left:45px;top:655px;width:56px;height:20px;font-size:13px;line-height:18px;font-weight:bold">重置</div><div class="tab" style="left:268px;top:805px;width:17px;height:58px;border-radius:0 8px 8px 0"></div><div class="panel" style="left:3px;top:785px;width:269px;height:261px;border-radius:4px"></div><svg class="abs" style="left:249.3px;top:810.7px" width="40" height="40" viewBox="-20 -20 40 40"><g transform="scale(1,1)"><path d="M0 -16.7 A9.4 16.7 0 0 1 0 16.7 L0 8.3 A4.4 8.3 0 0 0 0 -8.3Z" fill="#f8961c"/><circle cx="-4.200" cy="-1.500" r="2.900" fill="#f8961c"/></g></svg><div class="cell" style="left:5px;top:788px;"><svg width="77" height="59" viewBox="0 0 77 59"><defs><filter id="bsh" x="-30%" y="-30%" width="160%" height="160%"><feGaussianBlur stdDeviation="2"/></filter><linearGradient id="b1" x1="0" y1="0" x2="1" y2="0"><stop offset="0" stop-color="#f9e4d4"/><stop offset=".55" stop-color="#f3cdb6"/><stop offset="1" stop-color="#e9b79c"/></linearGradient></defs><g transform="translate(40 31) rotate(-47)"><path d="M0 -36 L12 26 L-10 30Z" fill="#000" opacity=".28" filter="url(#bsh)" transform="translate(5 4)"/><path d="M0 -37 L11 27 L-9 31 Z" fill="url(#b1)"/><path d="M0 -37 L1.200 -22 L-1 -22Z" fill="#6a6a6a"/><path d="M0 -37 L0.400 -10" stroke="#caa" stroke-width=".6"/><path d="M-5 10 C-3 6 0 8 1 11 C3 7 7 8 8.500 12 L11 27 L-9 31 Z" fill="#f7961f"/><path d="M-2 14 C0 12 2 13 3 16 L5 28 L-3 30Z" fill="#fbb040"/><path d="M-9 31 L11 27 L10 24 L-8 28Z" fill="#fde0b0"/></g></svg></div><div class="cell" style="left:87px;top:788px;"><svg width="77" height="59" viewBox="0 0 77 59"><defs><linearGradient id="b2" x1="0" y1="0" x2="1" y2="0"><stop offset="0" stop-color="#e0c49a"/><stop offset=".45" stop-color="#c49a62"/><stop offset="1" stop-color="#94703e"/></linearGradient><linearGradient id="b2f" x1="0" y1="0" x2="1" y2="0"><stop offset="0" stop-color="#f4f4f6"/><stop offset=".5" stop-color="#c2c2c8"/><stop offset="1" stop-color="#77777f"/></linearGradient></defs><g transform="translate(37 28) rotate(-47)"><path d="M0 -32 C9 -10 10 6 5 24 L5 34 L-5 34 L-5 24 C-10 6 -9 -10 0 -32Z" fill="#000" opacity=".28" filter="url(#bsh)" transform="translate(5 4)"/><path d="M0 -34 C8 -12 9 6 5 22 L-5 22 C-9 6 -8 -12 0 -34Z" fill="url(#b2)"/><path d="M0 -30 C2 -10 2 5 1 22" stroke="#a8834e" stroke-width=".8" fill="none"/><rect x="-5" y="22" width="10" height="10" fill="url(#b2f)"/><rect x="-5" y="32" width="10" height="2.500" fill="#4a4a50"/></g></svg></div><div class="cell" style="left:168px;top:786.500px;width:80px;height:62px;background:#ff9a10;box-shadow:0 0 0 1px #4d90e0;"><div style="position:absolute;left:1px;top:1.500px"><svg width="77" height="59" viewBox="0 0 77 59"><defs><linearGradient id="b3" x1="0" y1="0" x2="1" y2="0"><stop offset="0" stop-color="#fadb7e"/><stop offset=".45" stop-color="#eaa932"/><stop offset="1" stop-color="#b47515"/></linearGradient></defs><g transform="translate(41 30) rotate(-48) scale(1.08)"><path d="M0 -30 C10 -22 12 -5 12 25 L-12 25 C-12 -5 -10 -22 0 -30Z" fill="#7a4a00" opacity=".4" filter="url(#bsh)" transform="translate(5 4)"/><path d="M0 -33 C8 -27 10.500 -8 10.500 16 L-10.500 16 C-10.500 -8 -8 -27 0 -33Z" fill="url(#b3)"/><path d="M-3 -30 C-7 -20 -7.500 -5 -7.500 14" stroke="#fde9a8" stroke-width="1.600" fill="none" opacity=".8"/><path d="M-10.500 16 L10.500 16 L10.500 19 L-10.500 19Z" fill="#8a5a1a"/><path d="M-10.500 19 H10.500 V23 C4 26 -4 26 -10.500 23Z" fill="#ecd0a4"/><path d="M-10.500 23 C-4 26 4 26 10.500 23 V25.500 C4 29 -4 29 -10.500 25.500Z" fill="#a87a3a"/><path d="M-10.500 25.500 C-4 29 4 29 10.500 25.500 V27 C4 31 -4 31 -10.500 27Z" fill="#e6c590"/></g></svg></div></div><div class="cell" style="left:5px;top:854px;"><svg width="77" height="59" viewBox="0 0 77 59"><g transform="translate(38 30) rotate(-52)"><path d="M0 -30 L8 -12 L10 28 L-10 28 L-8 -12Z" fill="#000" opacity=".3" filter="url(#bsh)" transform="translate(5 4)"/><path d="M0 -33 L7 -14 L5 -6 L-5 -6 L-7 -14Z" fill="#e0b428"/><path d="M0 -33 L0 -18" stroke="#6a4a00" stroke-width="1"/><circle cx="0" cy="-17" r="1.300" fill="#3a2a00"/><rect x="-7" y="-6" width="14" height="5" fill="#c89a18"/><path d="M-7 -1 H7 L10 24 H-10Z" fill="#151515"/><path d="M-3 -1 H0 L1 24 H-4Z" fill="#3a3a3a"/><path d="M-10 24 H10 V29 C4 32 -4 32 -10 29Z" fill="#e0b428"/></g></svg></div><div class="cell" style="left:87px;top:854px;"><svg width="77" height="59" viewBox="0 0 77 59"><defs><linearGradient id="b5" x1="0" y1="0" x2="1" y2="0"><stop offset="0" stop-color="#e8e8ec"/><stop offset=".5" stop-color="#9a9aa2"/><stop offset="1" stop-color="#5a5a62"/></linearGradient></defs><g transform="translate(40 30) rotate(-48)"><path d="M-10 -28 H10 V-6 L5 30 H-5 L-10 -6Z" fill="#000" opacity=".3" filter="url(#bsh)" transform="translate(5 4)"/><path d="M-10 -30 H10 V-8 H-10Z" fill="#c96a3a"/><path d="M-10 -30 H-3 V-8 H-10Z" fill="#e89a6a"/><path d="M-10 -8 H10 L5 30 H-5Z" fill="url(#b5)"/><path d="M-5 30 H5 V33 H-5Z" fill="#333"/></g></svg></div><div class="cell" style="left:169px;top:854px;"><svg width="77" height="59" viewBox="0 0 77 59"><g transform="translate(40 31) rotate(-40)"><path d="M0 -30 C8 -10 6 0 6 28 H-6 C-6 0 -8 -10 0 -30Z" fill="#000" opacity=".28" filter="url(#bsh)" transform="translate(5 4)"/><path d="M-8 -34 C-2 -30 6 -16 6 -2 L-6 -2 C-8 -14 -4 -24 -8 -34Z" fill="#2a2a2e"/><path d="M0 -20 C4 -14 5 -8 5 -2 L-2 -2 C-3 -10 -2 -14 0 -20Z" fill="#e8e8e8"/><rect x="-6" y="-2" width="12" height="7" fill="#cfcfd4"/><path d="M-7 5 H7 V28 C3 31 -3 31 -7 28Z" fill="#7a4a3a"/><path d="M-7 5 H-2 V29 C-4 30 -6 29 -7 28Z" fill="#a07060"/></g></svg></div><div class="cell" style="left:5px;top:920px;"><svg width="77" height="59" viewBox="0 0 77 59"><defs><linearGradient id="b7" x1="0" y1="0" x2="1" y2="1"><stop offset="0" stop-color="#f6f7f9"/><stop offset="1" stop-color="#c9ccd3"/></linearGradient></defs><g><path d="M18 6.500 L60 42" stroke="#000" stroke-width="7" opacity=".3" filter="url(#bsh)" transform="translate(4 5)" fill="none"/><path d="M48.500 35.500 L29 55.500" stroke="#9a9fa8" stroke-width="3.800" stroke-linecap="round"/><path d="M47.500 35 L28.500 54.500" stroke="#d5d8de" stroke-width="1.400" stroke-linecap="round"/><path d="M43.500 17 L42.500 27" stroke="#7f848d" stroke-width="3"/><rect x="39" y="9.500" width="10" height="8.500" rx="2" fill="#a9aeb7"/><rect x="40" y="10.500" width="3" height="6.500" fill="#d9dce2"/><rect x="41" y="7" width="7" height="4" rx="1" fill="#1c1c1c"/><path d="M19.500 7.800 L59.500 41.600" stroke="#9aa0aa" stroke-width="7.200" stroke-linecap="round"/><path d="M19.500 7.800 L59.500 41.600" stroke="url(#b7)" stroke-width="5.600" stroke-linecap="round"/><path d="M21 7.500 L60 40.500" stroke="#fff" stroke-width="1.400" stroke-linecap="round" opacity=".9"/><path d="M16.500 5.300 L20 8.200" stroke="#2a2a2a" stroke-width="3.200" stroke-linecap="round"/><path d="M50 28.500 L55 31 L52 34.500Z" fill="#8a8f98"/></g></svg></div><div class="cell" style="left:87px;top:920px;"><svg width="77" height="59" viewBox="0 0 77 59"><g transform="translate(39 30) rotate(-45)"><path d="M-3 -32 H3 L11 4 V28 H-11 V4Z" fill="#000" opacity=".25" filter="url(#bsh)" transform="translate(5 4)"/><path d="M-2.500 -34 H2.500 L3 -26 H-3Z" fill="#e8a050"/><path d="M-3 -26 H3 L11 2 V26 H-11 V2Z" fill="#f2f2f2"/><path d="M-3 -26 H0 L-4 2 V26 H-11 V2Z" fill="#d8d8da"/><path d="M-11 26 H11 V30 H-11Z" fill="#c4c4c8"/></g></svg></div><div class="cell" style="left:169px;top:920px;"><svg width="77" height="59" viewBox="0 0 77 59"><g transform="translate(40 28)"><path d="M-22 -8 L0 -22 L12 -4 L-10 12Z" fill="#000" opacity=".3" filter="url(#bsh)" transform="translate(4 5)"/><defs><linearGradient id="b9" x1="0" y1="0" x2="1" y2="1"><stop offset="0" stop-color="#fbc24a"/><stop offset="1" stop-color="#e8851a"/></linearGradient></defs><path d="M-24 -8 L-2 -24 C2 -24 12 -10 11 -6 L-11 10 C-16 8 -24 -4 -24 -8Z" fill="url(#b9)"/><path d="M10 -8 L16 -12 L20 -4 L10 8 L18 20" fill="none" stroke="#666" stroke-width="1.800"/><path d="M14 14 L24 24" stroke="#f0a020" stroke-width="6" stroke-linecap="round"/></g></svg></div><div class="cell" style="left:5px;top:986px;"><svg width="77" height="59" viewBox="0 0 77 59"><g transform="translate(38 30) rotate(-52)"><path d="M-13 -24 H13 V30 H-13Z" fill="#000" opacity=".25" filter="url(#bsh)" transform="translate(5 4)"/><path d="M-8 -32 H8 V-22 H-8Z" fill="#f4f4f4"/><path d="M-13 -22 H13 V30 H-13Z" fill="#ececec"/><path d="M-13 -22 H-5 V30 H-13Z" fill="#fafafa"/><path d="M-13 4 H13 V30 H-13Z" fill="#f6c860" opacity=".5"/><path d="M2 0 H7 V30 H2Z" fill="#f5a623"/><path d="M-6 6 H-2 V30 H-6Z" fill="#f8c050"/></g></svg></div><div class="cell" style="left:87px;top:986px;"><svg width="77" height="59" viewBox="0 0 77 59"><g transform="translate(38 28) rotate(-47)"><path d="M0 -30 C8 -14 7 2 1.500 14 L1.500 34 H-1.500 V14 C-7 2 -8 -14 0 -30Z" fill="#000" opacity=".25" filter="url(#bsh)" transform="translate(5 4)"/><path d="M0 -32 C8 -15 7 0 1.500 12 H-1.500 C-7 0 -8 -15 0 -32Z" fill="#e9e9ec"/><path d="M0 -32 C3 -15 3 0 0 12 H-1.500 C-7 0 -8 -15 0 -32Z" fill="#cfd0d4"/><path d="M-1 12 H1 V26 H-1Z" fill="#888"/><path d="M-3 26 H3 V31 H-3Z" fill="#f0f0f0"/><path d="M-3 31 H3 V35 H-3Z" fill="#e08a3a"/></g></svg></div><div class="cell" style="left:169px;top:986px;"><svg width="77" height="59" viewBox="0 0 77 59"><g transform="translate(40 30) rotate(-50)"><path d="M-12 -18 C-12 -30 12 -30 12 -18 V28 H-12Z" fill="#000" opacity=".3" filter="url(#bsh)" transform="translate(5 4)"/><path d="M-12 -20 C-12 -34 12 -34 12 -20 V-12 H-12Z" fill="#fdf6cc"/><path d="M-12 -12 H12 V28 H-12Z" fill="#f0a868"/><path d="M-12 -2 H12 V8 H-12Z" fill="#fbe25a"/><path d="M-12 -12 H-6 V28 H-12Z" fill="#f8c8a0" opacity=".7"/><path d="M-12 14 H12 V28 H-12Z" fill="#f4b480"/></g></svg></div><div class="abs" style="left:252px;top:887px;width:17px;height:47px;box-sizing:border-box;border:1px solid #c9c9c9;background:#ececec"></div><svg class="abs" style="left:252px;top:887px" width="17" height="47" viewBox="0 0 17 47"><path d="M9 6 C7 16 10 28 7 41" fill="none" stroke="#3f8f3f" stroke-width="1.800"/><path d="M8 14 L4 10 M8.500 22 L13 18 M8 30 L4 27 M8 36 L12 33" stroke="#4a9a4a" stroke-width="1.400"/></svg><div class="abs" style="left:252px;top:948px;width:17px;height:45px;box-sizing:border-box;border:1px solid #c9c9c9;background:#ececec"></div><svg class="abs" style="left:252px;top:948px" width="17" height="45" viewBox="0 0 17 45"><rect x="3" y="7" width="11" height="31" fill="#f4ecd0"/><path d="M3 20 L7 13 L10 18 L14 12 V26 H3Z" fill="#b090d0"/><path d="M3 26 H14 V32 H3Z" fill="#60b070"/><path d="M3 32H14V38H3Z" fill="#e0a060"/><circle cx="6" cy="11" r="1.800" fill="#f0c040"/></svg><div class="tab" style="left:1752px;top:398px;width:22px;height:60px;border-radius:8px 0 0 8px"></div><div class="panel" style="left:1768px;top:373px;width:147px;height:293px;border-radius:5px"></div><svg class="abs" style="left:1755.0px;top:411.5px" width="40" height="40" viewBox="-20 -20 40 40"><g transform="scale(-1,1)"><path d="M0 -16.7 A12.0 16.7 0 0 1 0 16.7 L0 8.3 A5.6 8.3 0 0 0 0 -8.3Z" fill="#f8961c"/><circle cx="-4.200" cy="-1.500" r="2.900" fill="#f8961c"/></g></svg><div class="t14" style="left:1785px;top:386px;font-size:14.500px">图层</div><svg class="abs" style="left:1780px;top:418px" width="110" height="24" viewBox="1780 418 110 24">
<path d="M1784 430 C1787 425 1796 425 1799.500 430 C1796 435 1787 435 1784 430Z" fill="#fff" stroke="#222" stroke-width="1.300"/><circle cx="1791.800" cy="430" r="2.700" fill="#222"/>
<rect x="1811" y="429" width="8" height="7" fill="#222"/><path d="M1816.500 429 V426 C1816.500 423 1821.500 423 1821.500 426 V427.500" fill="none" stroke="#222" stroke-width="1.500"/><circle cx="1815" cy="432.300" r="1" fill="#fff"/>
<circle cx="1838" cy="428.500" r="6.800" fill="#fff" stroke="#222" stroke-width="1"/><path d="M1838 421.700 A6.800 6.800 0 0 1 1838 435.300Z" fill="#111"/>
</svg><div class="lbtn" style="left:1853px;top:421px"><i style="top:3px"></i><i style="top:6px"></i><i style="top:9px"></i></div><div class="arr" style="left:1873px;top:428px;border-left-width:3px;border-right-width:3px"></div><div class="abs" style="left:1781px;top:447px;width:107px;height:187px;background:#808080;overflow:hidden"><div class="abs" style="left:6px;top:0;width:90px;height:1px;background:#e9dc9f"></div><div class="abs" style="left:0;top:1px;width:107px;height:75px;background:#ffa500"></div><div class="abs" style="left:6px;top:3px;width:90px;height:70px;background-color:#fff;background-image:linear-gradient(45deg,#c4c4c4 25%,transparent 25%,transparent 75%,#c4c4c4 75%),linear-gradient(45deg,#c4c4c4 25%,transparent 25%,transparent 75%,#c4c4c4 75%);background-size:16.400px 16.400px;background-position:0 0,8.200px 8.200px;"></div><svg class="abs" style="left:6px;top:30px" width="90" height="43" viewBox="0 0 90 43"><path d="M0 8 C20 5 50 4 72 8 C80 9.500 86 12 90 13 L90 43 L0 43Z" fill="#e9dc9f"/></svg><div class="abs" style="left:6px;top:78px;width:90px;height:68px;background-color:#fff;background-image:linear-gradient(45deg,#c4c4c4 25%,transparent 25%,transparent 75%,#c4c4c4 75%),linear-gradient(45deg,#c4c4c4 25%,transparent 25%,transparent 75%,#c4c4c4 75%);background-size:16.400px 16.400px;background-position:0 0,8.200px 8.200px;"></div><div class="abs" style="left:17px;top:96px;width:5px;height:1.500px;background:#555"></div><div class="abs" style="left:86px;top:100px;width:6px;height:6px;border-radius:3px;background:#bbb"></div><div class="abs" style="left:6px;top:149px;width:90px;height:40px;background:#fff"></div></div><div class="abs" style="left:1889px;top:447px;width:16px;height:187px;background:#f1f1f1"></div><div class="abs" style="left:1890px;top:598px;width:14px;height:16px;background:#c8c8c8"></div><svg class="abs" style="left:1889px;top:447px" width="16" height="187" viewBox="0 0 16 187"><path d="M4.500 12 L8 8 L11.500 12" fill="none" stroke="#444" stroke-width="1.600"/><path d="M4.500 175 L8 179 L11.500 175" fill="none" stroke="#444" stroke-width="1.600"/></svg><div class="btn" style="left:1789px;top:640px;width:68px;height:21px;border-radius:6px;font-size:14px;line-height:19px;color:#666;letter-spacing:2px">新建</div><div class="lbtn" style="left:1863px;top:646px"><i style="top:3px"></i><i style="top:6px"></i><i style="top:9px"></i></div><div class="arr" style="left:1884px;top:654px;border-left-width:3px;border-right-width:3px"></div><div class="tab" style="left:1630px;top:814px;width:24px;height:54px;border-radius:9px 0 0 9px"></div><div class="panel" style="left:1643px;top:796px;width:273px;height:244px;border-radius:9px;background:#fbfbfb"></div><svg class="abs" style="left:1625.7px;top:821.0px" width="40" height="40" viewBox="-20 -20 40 40"><g transform="scale(-1,1)"><path d="M0 -16.0 A9.0 16.0 0 0 1 0 16.0 L0 8.0 A4.2 8.0 0 0 0 0 -8.0Z" fill="#f8961c"/><circle cx="-4.200" cy="-1.500" r="2.900" fill="#f8961c"/></g></svg><div class="abs" style="left:1654px;top:803px;width:47px;height:19px;background:#e9dc9f"></div><div class="lab" style="left:1707px;top:809px">R:</div><div class="inp" style="left:1725px;top:803px;width:45px;height:20px">233</div><div class="lab" style="left:1774px;top:809px">G:</div><div class="inp" style="left:1792px;top:803px;width:45px;height:20px">220</div><div class="lab" style="left:1840px;top:809px">B:</div><div class="inp" style="left:1858px;top:803px;width:45px;height:20px">159</div><div class="abs" style="left:1654px;top:830px;width:199px;height:146px;box-sizing:border-box;border:1px solid #1a1a10;background:linear-gradient(180deg,rgba(0,0,0,0),#000),linear-gradient(90deg,#fff,#ffd200)"></div><div class="abs" style="left:1713px;top:838px;width:9px;height:9px;border:1px solid #111;border-radius:6px"></div><div class="abs" style="left:1860px;top:829px;width:52px;height:148px;background:#fff"></div><div class="abs" style="left:1871px;top:832px;width:31px;height:141px;box-sizing:border-box;border:1px solid #3a2a2a;background:linear-gradient(180deg,#ff0030 0%,#ff00ff 16.600%,#0000ff 33.300%,#00ffff 50%,#00ff00 66.600%,#ffff00 83.300%,#ff0000 100%)"></div><svg class="abs" style="left:1860px;top:946px" width="52" height="18" viewBox="0 0 52 18"><path d="M2 5 L6 5 L9.500 9 L6 13 L2 13Z" fill="#fff" stroke="#333" stroke-width="1"/><path d="M50 5 L46 5 L42.500 9 L46 13 L50 13Z" fill="#fff" stroke="#333" stroke-width="1"/></svg><div class="lab" style="left:1652px;top:1000px;color:#888;font-family:'Liberation Serif',serif;font-size:11px;letter-spacing:.5px">Alpha</div><div class="abs" style="left:1693px;top:995px;width:151px;height:21px;background:#fff"></div><div class="abs" style="left:1696px;top:999px;width:145px;height:12px;background-color:#fff;background-image:linear-gradient(45deg,#ccc 25%,transparent 25%,transparent 75%,#ccc 75%),linear-gradient(45deg,#ccc 25%,transparent 25%,transparent 75%,#ccc 75%);background-size:6px 6px;background-position:0 0,3px 3px;"></div><div class="abs" style="left:1696px;top:999px;width:145px;height:12px;background:linear-gradient(90deg,rgba(233,220,159,0),rgba(233,220,159,1) 70%)"></div><div class="abs" style="left:1836px;top:1009px;width:0;height:0;border-left:4px solid transparent;border-right:4px solid transparent;border-bottom:6px solid #111"></div><div class="inp" style="left:1863px;top:996px;width:45px;height:21px;border-color:#c0c0c0;background:#f6f6f6;color:#888;font-size:12px;text-align:right;padding-right:17px;line-height:17px">255</div><svg class="abs" style="left:1893px;top:998px" width="13" height="17" viewBox="0 0 13 17"><rect x="0" y="0" width="13" height="17" fill="#f0f0f0"/><path d="M3.500 6.500 L6.500 3 L9.500 6.500Z M3.500 10.500 L6.500 14 L9.500 10.500Z" fill="#555"/></svg>
</body></html>
